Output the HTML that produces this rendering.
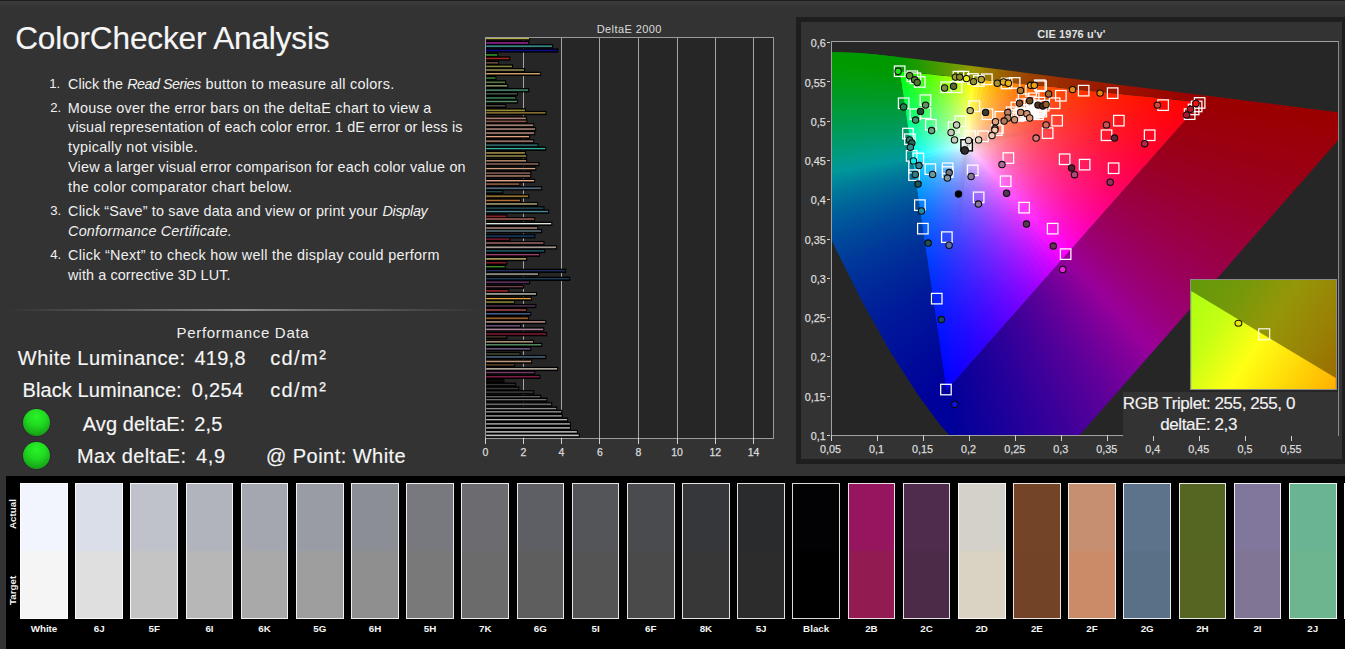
<!DOCTYPE html><html><head><meta charset="utf-8"><title>ColorChecker Analysis</title><style>
*{margin:0;padding:0;box-sizing:border-box}
html,body{width:1345px;height:649px;overflow:hidden;background:#333;font-family:"Liberation Sans",sans-serif;color:#f2f2f2}
body{position:relative}
div,i,svg{position:absolute}
.lay{left:0;top:0;width:100%;height:100%}
#topline{left:0;top:0;width:1345px;height:8px;background:linear-gradient(#1e1e1e 0,#1e1e1e 1px,#3b3b3b 1px,#333 8px)}
#title{left:14px;top:17px;font-size:32px;line-height:40px;white-space:nowrap;color:#f6f6f6;letter-spacing:-0.2px}
.li{left:50px;font-size:15px;line-height:19.9px;white-space:nowrap;color:#f0f0f0}
.li b{position:absolute;left:0;font-weight:normal;font-size:13.5px}
.li span{position:absolute;left:18.4px;top:0;display:block}
#hr{left:7px;top:309px;width:474px;height:1.6px;background:linear-gradient(90deg,#333 0,#4c4c4c 15%,#6e6e6e 35%,#8a8a8a 50%,#6e6e6e 65%,#4c4c4c 85%,#333 100%)}
.t{line-height:24px;white-space:nowrap}
.led{width:27.2px;height:27.3px;border-radius:50%;background:radial-gradient(circle at 50% 28%,#28f428 0,#20d820 40%,#18ac18 72%,#0f7c0f 100%);box-shadow:0 0 1.5px rgba(0,0,0,.5)}
#barplot{left:485px;top:37px;width:289px;height:401.5px;background:#262626;border:1px solid #9a9a9a;overflow:hidden}
#barplot i{left:0;height:4.4px;border-right:1px solid #000;display:block;background:linear-gradient(#000 1.35px,var(--c) 1.55px,var(--c) 2.15px,#000 2.8px)}
.bg{top:0;width:1px;height:400px;background:#a4a4a4}
.bt{top:438px;width:1px;height:5.7px;background:#d0d0d0}
.bl,.cl{width:40px;text-align:center;font-size:10.5px;line-height:14px;color:#dcdcdc;-webkit-text-stroke:0.25px #dcdcdc}
.bl{top:445.3px}
.ct{top:435px;width:1px;height:5.6px;background:#d0d0d0}
.cl{top:442.3px;font-size:10.8px}
.cyt{left:826.8px;width:3.2px;height:1px;background:#d0d0d0}
.cyl{left:786px;width:39.8px;text-align:right;font-size:10.8px;line-height:14px;color:#dcdcdc;-webkit-text-stroke:0.25px #dcdcdc}
#ciepanel{left:795.5px;top:17.1px;width:551.6px;height:447.4px;background:#333;border:5.5px solid #1e1e1e}
#cieplot{background:#262626;overflow:hidden}
#cieframe{left:830.8px;top:40.9px;width:508.4px;height:395px;border:1px solid #a0a0a0;border-right-color:#8a8a8a}
#strip{left:6px;top:475.5px;width:1339px;height:174px;background:#000}
.sw{top:482.7px;width:47.8px;height:136.2px;border:1px solid rgba(255,255,255,.85)}
.swl{top:622.5px;width:67.8px;text-align:center;font-size:9.8px;line-height:12px;font-weight:bold;color:#f4f4f4}
.rot{font-size:9.8px;font-weight:bold;line-height:12px;color:#f4f4f4;transform:rotate(-90deg);transform-origin:0 0;white-space:nowrap}
#inset{left:1190.2px;top:278.6px;width:146.6px;height:111.4px;border:1px solid #8c8c8c;overflow:hidden;background:#888}
#rgbbox{left:1122.5px;top:391.5px;width:215.7px;height:44.6px;background:#333}
.rb{font-size:17px;line-height:20px;white-space:nowrap;color:#f2f2f2}
</style></head><body>
<div id="topline"></div>
<div id="hr"></div>
<div class="led" style="left:22.9px;top:409.1px"></div>
<div class="led" style="left:22.9px;top:442.1px"></div>
<div id="barplot"><div class="bg" style="left:37.0px"></div><div class="bg" style="left:75.0px"></div><div class="bg" style="left:113.4px"></div><div class="bg" style="left:152.0px"></div><div class="bg" style="left:191.0px"></div><div class="bg" style="left:229.0px"></div><div class="bg" style="left:267.0px"></div><svg class="lay" width="287" height="400" viewBox="0 0 287 400"><g fill="#000"><rect y="-1.65" width="44.0" height="4.3"/><rect y="2.95" width="43.1" height="4.3"/><rect y="6.15" width="67.1" height="4.3"/><rect y="10.35" width="72.2" height="4.3"/><rect y="14.95" width="12.2" height="4.3"/><rect y="18.35" width="24.2" height="4.3"/><rect y="22.85" width="13.1" height="4.3"/><rect y="26.35" width="26.9" height="4.3"/><rect y="30.05" width="39.0" height="4.3"/><rect y="33.75" width="55.1" height="4.3"/><rect y="38.05" width="10.3" height="4.3"/><rect y="42.25" width="20.0" height="4.3"/><rect y="45.85" width="22.1" height="4.3"/><rect y="50.15" width="43.1" height="4.3"/><rect y="53.85" width="32.0" height="4.3"/><rect y="58.05" width="30.2" height="4.3"/><rect y="61.45" width="32.0" height="4.3"/><rect y="65.85" width="20.3" height="4.3"/><rect y="70.35" width="39.9" height="4.3"/><rect y="72.95" width="60.4" height="4.3"/><rect y="78.35" width="40.8" height="4.3"/><rect y="81.35" width="41.3" height="4.3"/><rect y="85.25" width="48.2" height="4.3"/><rect y="89.15" width="50.1" height="4.3"/><rect y="93.15" width="49.1" height="4.3"/><rect y="96.65" width="44.0" height="4.3"/><rect y="101.25" width="48.2" height="4.3"/><rect y="105.25" width="52.4" height="4.3"/><rect y="108.65" width="60.2" height="4.3"/><rect y="113.05" width="39.9" height="4.3"/><rect y="116.15" width="41.1" height="4.3"/><rect y="120.95" width="41.1" height="4.3"/><rect y="124.15" width="53.3" height="4.3"/><rect y="128.65" width="50.3" height="4.3"/><rect y="133.25" width="45.2" height="4.3"/><rect y="136.15" width="45.2" height="4.3"/><rect y="140.85" width="49.1" height="4.3"/><rect y="144.25" width="34.2" height="4.3"/><rect y="148.35" width="56.2" height="4.3"/><rect y="151.85" width="17.2" height="4.3"/><rect y="156.35" width="43.1" height="4.3"/><rect y="160.55" width="35.0" height="4.3"/><rect y="164.15" width="52.1" height="4.3"/><rect y="168.35" width="58.4" height="4.3"/><rect y="171.65" width="63.2" height="4.3"/><rect y="176.45" width="21.2" height="4.3"/><rect y="179.25" width="49.1" height="4.3"/><rect y="183.85" width="66.2" height="4.3"/><rect y="188.25" width="52.1" height="4.3"/><rect y="191.25" width="56.1" height="4.3"/><rect y="196.35" width="49.3" height="4.3"/><rect y="199.35" width="24.2" height="4.3"/><rect y="203.25" width="58.4" height="4.3"/><rect y="207.45" width="71.1" height="4.3"/><rect y="211.15" width="59.1" height="4.3"/><rect y="214.85" width="54.0" height="4.3"/><rect y="219.15" width="41.1" height="4.3"/><rect y="223.05" width="21.2" height="4.3"/><rect y="226.95" width="19.7" height="4.3"/><rect y="230.95" width="80.1" height="4.3"/><rect y="234.35" width="53.0" height="4.3"/><rect y="238.95" width="84.2" height="4.3"/><rect y="242.45" width="44.0" height="4.3"/><rect y="246.85" width="38.0" height="4.3"/><rect y="251.15" width="23.1" height="4.3"/><rect y="254.25" width="51.0" height="4.3"/><rect y="258.85" width="45.9" height="4.3"/><rect y="262.35" width="29.0" height="4.3"/><rect y="266.25" width="50.3" height="4.3"/><rect y="270.35" width="41.1" height="4.3"/><rect y="274.15" width="45.2" height="4.3"/><rect y="278.55" width="43.1" height="4.3"/><rect y="282.25" width="60.2" height="4.3"/><rect y="286.15" width="35.0" height="4.3"/><rect y="289.65" width="58.2" height="4.3"/><rect y="294.35" width="61.1" height="4.3"/><rect y="297.25" width="21.2" height="4.3"/><rect y="302.15" width="48.0" height="4.3"/><rect y="305.15" width="56.2" height="4.3"/><rect y="309.25" width="45.2" height="4.3"/><rect y="314.35" width="34.5" height="4.3"/><rect y="317.35" width="60.2" height="4.3"/><rect y="321.75" width="46.1" height="4.3"/><rect y="325.25" width="29.0" height="4.3"/><rect y="329.25" width="72.1" height="4.3"/><rect y="332.85" width="49.2" height="4.3"/><rect y="337.15" width="54.4" height="4.3"/><rect y="341.25" width="18.3" height="4.3"/><rect y="344.95" width="30.1" height="4.3"/><rect y="348.85" width="33.2" height="4.3"/><rect y="352.55" width="48.2" height="4.3"/><rect y="357.05" width="55.2" height="4.3"/><rect y="360.05" width="61.4" height="4.3"/><rect y="364.65" width="66.1" height="4.3"/><rect y="368.95" width="71.2" height="4.3"/><rect y="372.25" width="76.2" height="4.3"/><rect y="376.35" width="76.8" height="4.3"/><rect y="380.05" width="82.1" height="4.3"/><rect y="384.35" width="84.9" height="4.3"/><rect y="388.35" width="84.9" height="4.3"/><rect y="392.35" width="91.9" height="4.3"/><rect y="395.75" width="93.8" height="4.3"/></g><g><rect y="-0.25" width="42.9" height="1.1" fill="#e0d060"/><rect y="4.35" width="42.0" height="1.1" fill="#c030c0"/><rect y="7.55" width="66.0" height="1.1" fill="#50c0c0"/><rect y="11.75" width="71.1" height="1.1" fill="#1010a0"/><rect y="16.35" width="11.1" height="1.1" fill="#40c040"/><rect y="19.75" width="23.1" height="1.1" fill="#c03020"/><rect y="24.25" width="12.0" height="1.1" fill="#806050"/><rect y="27.75" width="25.8" height="1.1" fill="#a0a050"/><rect y="31.45" width="37.9" height="1.1" fill="#c0b070"/><rect y="35.15" width="54.0" height="1.1" fill="#e0b070"/><rect y="39.45" width="9.2" height="1.1" fill="#50a050"/><rect y="43.65" width="18.9" height="1.1" fill="#70a060"/><rect y="47.25" width="21.0" height="1.1" fill="#a0b080"/><rect y="51.55" width="42.0" height="1.1" fill="#60b090"/><rect y="55.25" width="30.9" height="1.1" fill="#506050"/><rect y="59.45" width="29.1" height="1.1" fill="#50a070"/><rect y="62.85" width="30.9" height="1.1" fill="#60a070"/><rect y="67.25" width="19.2" height="1.1" fill="#605a50"/><rect y="71.75" width="38.8" height="1.1" fill="#c0b040"/><rect y="74.35" width="59.3" height="1.1" fill="#b09040"/><rect y="79.75" width="39.7" height="1.1" fill="#e0a090"/><rect y="82.75" width="40.2" height="1.1" fill="#b07060"/><rect y="86.65" width="47.1" height="1.1" fill="#e0b0a0"/><rect y="90.55" width="49.0" height="1.1" fill="#e0b0a0"/><rect y="94.55" width="48.0" height="1.1" fill="#e0b0a0"/><rect y="98.05" width="42.9" height="1.1" fill="#e0a080"/><rect y="102.65" width="47.1" height="1.1" fill="#d0a090"/><rect y="106.65" width="51.3" height="1.1" fill="#409090"/><rect y="110.05" width="59.1" height="1.1" fill="#30b0a0"/><rect y="114.45" width="38.8" height="1.1" fill="#d0b060"/><rect y="117.55" width="40.0" height="1.1" fill="#c0b060"/><rect y="122.35" width="40.0" height="1.1" fill="#d0a080"/><rect y="125.55" width="52.2" height="1.1" fill="#b08070"/><rect y="130.05" width="49.2" height="1.1" fill="#d0a080"/><rect y="134.65" width="44.1" height="1.1" fill="#b08070"/><rect y="137.55" width="44.1" height="1.1" fill="#d0a080"/><rect y="142.25" width="48.0" height="1.1" fill="#f0b090"/><rect y="145.65" width="33.1" height="1.1" fill="#c08060"/><rect y="149.75" width="55.1" height="1.1" fill="#7090b0"/><rect y="153.25" width="16.1" height="1.1" fill="#205050"/><rect y="157.75" width="42.0" height="1.1" fill="#d0a040"/><rect y="161.95" width="33.9" height="1.1" fill="#d08040"/><rect y="165.55" width="51.0" height="1.1" fill="#d0c890"/><rect y="169.75" width="57.3" height="1.1" fill="#306070"/><rect y="173.05" width="62.1" height="1.1" fill="#5090a0"/><rect y="177.85" width="20.1" height="1.1" fill="#b03030"/><rect y="180.65" width="48.0" height="1.1" fill="#d08070"/><rect y="185.25" width="65.1" height="1.1" fill="#e0e8e0"/><rect y="189.65" width="51.0" height="1.1" fill="#e0b0a0"/><rect y="192.65" width="55.0" height="1.1" fill="#7090a0"/><rect y="197.75" width="48.2" height="1.1" fill="#205080"/><rect y="200.75" width="23.1" height="1.1" fill="#a02040"/><rect y="204.65" width="57.3" height="1.1" fill="#c08080"/><rect y="208.85" width="70.0" height="1.1" fill="#e0d0c8"/><rect y="212.55" width="58.0" height="1.1" fill="#207080"/><rect y="216.25" width="52.9" height="1.1" fill="#a04070"/><rect y="220.55" width="40.0" height="1.1" fill="#e0d080"/><rect y="224.45" width="20.1" height="1.1" fill="#a02030"/><rect y="228.35" width="18.6" height="1.1" fill="#409030"/><rect y="232.35" width="79.0" height="1.1" fill="#203060"/><rect y="235.75" width="51.9" height="1.1" fill="#d0d0c0"/><rect y="240.35" width="83.1" height="1.1" fill="#204060"/><rect y="243.85" width="42.9" height="1.1" fill="#804080"/><rect y="248.25" width="36.9" height="1.1" fill="#704050"/><rect y="252.55" width="22.0" height="1.1" fill="#c03030"/><rect y="255.65" width="49.9" height="1.1" fill="#e0e0d0"/><rect y="260.25" width="44.8" height="1.1" fill="#e0a040"/><rect y="263.75" width="27.9" height="1.1" fill="#b0b040"/><rect y="267.65" width="49.2" height="1.1" fill="#604060"/><rect y="271.75" width="40.0" height="1.1" fill="#d06060"/><rect y="275.55" width="44.1" height="1.1" fill="#5070a0"/><rect y="279.95" width="42.0" height="1.1" fill="#d08030"/><rect y="283.65" width="59.1" height="1.1" fill="#e0b0a0"/><rect y="287.55" width="33.9" height="1.1" fill="#806090"/><rect y="291.05" width="57.1" height="1.1" fill="#d0a0c0"/><rect y="295.75" width="60.0" height="1.1" fill="#a02040"/><rect y="298.65" width="20.1" height="1.1" fill="#504030"/><rect y="303.55" width="46.9" height="1.1" fill="#d0b090"/><rect y="306.55" width="55.1" height="1.1" fill="#60a070"/><rect y="310.65" width="44.1" height="1.1" fill="#8070a0"/><rect y="315.75" width="33.4" height="1.1" fill="#506040"/><rect y="318.75" width="59.1" height="1.1" fill="#6080a0"/><rect y="323.15" width="45.0" height="1.1" fill="#e0b090"/><rect y="326.65" width="27.9" height="1.1" fill="#705030"/><rect y="330.65" width="71.0" height="1.1" fill="#e0d8c8"/><rect y="334.25" width="48.1" height="1.1" fill="#804070"/><rect y="338.55" width="53.3" height="1.1" fill="#902050"/><rect y="342.65" width="17.2" height="1.1" fill="#101010"/><rect y="346.35" width="29.0" height="1.1" fill="#303030"/><rect y="350.25" width="32.1" height="1.1" fill="#404040"/><rect y="353.95" width="47.1" height="1.1" fill="#505050"/><rect y="358.45" width="54.1" height="1.1" fill="#606060"/><rect y="361.45" width="60.3" height="1.1" fill="#707070"/><rect y="366.05" width="65.0" height="1.1" fill="#888888"/><rect y="370.35" width="70.1" height="1.1" fill="#909090"/><rect y="373.65" width="75.1" height="1.1" fill="#a0a0a0"/><rect y="377.75" width="75.7" height="1.1" fill="#b0b0b0"/><rect y="381.45" width="81.0" height="1.1" fill="#b8b8b8"/><rect y="385.75" width="83.8" height="1.1" fill="#c0c0c0"/><rect y="389.75" width="83.8" height="1.1" fill="#d0d0d0"/><rect y="393.75" width="90.8" height="1.1" fill="#e0e0e0"/><rect y="397.15" width="92.7" height="1.1" fill="#f4f4f4"/></g><g opacity=".45"><rect y="0.85" width="42.9" height="0.6" fill="#e0d060"/><rect y="5.45" width="42.0" height="0.6" fill="#c030c0"/><rect y="8.65" width="66.0" height="0.6" fill="#50c0c0"/><rect y="12.85" width="71.1" height="0.6" fill="#1010a0"/><rect y="17.45" width="11.1" height="0.6" fill="#40c040"/><rect y="20.85" width="23.1" height="0.6" fill="#c03020"/><rect y="25.35" width="12.0" height="0.6" fill="#806050"/><rect y="28.85" width="25.8" height="0.6" fill="#a0a050"/><rect y="32.55" width="37.9" height="0.6" fill="#c0b070"/><rect y="36.25" width="54.0" height="0.6" fill="#e0b070"/><rect y="40.55" width="9.2" height="0.6" fill="#50a050"/><rect y="44.75" width="18.9" height="0.6" fill="#70a060"/><rect y="48.35" width="21.0" height="0.6" fill="#a0b080"/><rect y="52.65" width="42.0" height="0.6" fill="#60b090"/><rect y="56.35" width="30.9" height="0.6" fill="#506050"/><rect y="60.55" width="29.1" height="0.6" fill="#50a070"/><rect y="63.95" width="30.9" height="0.6" fill="#60a070"/><rect y="68.35" width="19.2" height="0.6" fill="#605a50"/><rect y="72.85" width="38.8" height="0.6" fill="#c0b040"/><rect y="75.45" width="59.3" height="0.6" fill="#b09040"/><rect y="80.85" width="39.7" height="0.6" fill="#e0a090"/><rect y="83.85" width="40.2" height="0.6" fill="#b07060"/><rect y="87.75" width="47.1" height="0.6" fill="#e0b0a0"/><rect y="91.65" width="49.0" height="0.6" fill="#e0b0a0"/><rect y="95.65" width="48.0" height="0.6" fill="#e0b0a0"/><rect y="99.15" width="42.9" height="0.6" fill="#e0a080"/><rect y="103.75" width="47.1" height="0.6" fill="#d0a090"/><rect y="107.75" width="51.3" height="0.6" fill="#409090"/><rect y="111.15" width="59.1" height="0.6" fill="#30b0a0"/><rect y="115.55" width="38.8" height="0.6" fill="#d0b060"/><rect y="118.65" width="40.0" height="0.6" fill="#c0b060"/><rect y="123.45" width="40.0" height="0.6" fill="#d0a080"/><rect y="126.65" width="52.2" height="0.6" fill="#b08070"/><rect y="131.15" width="49.2" height="0.6" fill="#d0a080"/><rect y="135.75" width="44.1" height="0.6" fill="#b08070"/><rect y="138.65" width="44.1" height="0.6" fill="#d0a080"/><rect y="143.35" width="48.0" height="0.6" fill="#f0b090"/><rect y="146.75" width="33.1" height="0.6" fill="#c08060"/><rect y="150.85" width="55.1" height="0.6" fill="#7090b0"/><rect y="154.35" width="16.1" height="0.6" fill="#205050"/><rect y="158.85" width="42.0" height="0.6" fill="#d0a040"/><rect y="163.05" width="33.9" height="0.6" fill="#d08040"/><rect y="166.65" width="51.0" height="0.6" fill="#d0c890"/><rect y="170.85" width="57.3" height="0.6" fill="#306070"/><rect y="174.15" width="62.1" height="0.6" fill="#5090a0"/><rect y="178.95" width="20.1" height="0.6" fill="#b03030"/><rect y="181.75" width="48.0" height="0.6" fill="#d08070"/><rect y="186.35" width="65.1" height="0.6" fill="#e0e8e0"/><rect y="190.75" width="51.0" height="0.6" fill="#e0b0a0"/><rect y="193.75" width="55.0" height="0.6" fill="#7090a0"/><rect y="198.85" width="48.2" height="0.6" fill="#205080"/><rect y="201.85" width="23.1" height="0.6" fill="#a02040"/><rect y="205.75" width="57.3" height="0.6" fill="#c08080"/><rect y="209.95" width="70.0" height="0.6" fill="#e0d0c8"/><rect y="213.65" width="58.0" height="0.6" fill="#207080"/><rect y="217.35" width="52.9" height="0.6" fill="#a04070"/><rect y="221.65" width="40.0" height="0.6" fill="#e0d080"/><rect y="225.55" width="20.1" height="0.6" fill="#a02030"/><rect y="229.45" width="18.6" height="0.6" fill="#409030"/><rect y="233.45" width="79.0" height="0.6" fill="#203060"/><rect y="236.85" width="51.9" height="0.6" fill="#d0d0c0"/><rect y="241.45" width="83.1" height="0.6" fill="#204060"/><rect y="244.95" width="42.9" height="0.6" fill="#804080"/><rect y="249.35" width="36.9" height="0.6" fill="#704050"/><rect y="253.65" width="22.0" height="0.6" fill="#c03030"/><rect y="256.75" width="49.9" height="0.6" fill="#e0e0d0"/><rect y="261.35" width="44.8" height="0.6" fill="#e0a040"/><rect y="264.85" width="27.9" height="0.6" fill="#b0b040"/><rect y="268.75" width="49.2" height="0.6" fill="#604060"/><rect y="272.85" width="40.0" height="0.6" fill="#d06060"/><rect y="276.65" width="44.1" height="0.6" fill="#5070a0"/><rect y="281.05" width="42.0" height="0.6" fill="#d08030"/><rect y="284.75" width="59.1" height="0.6" fill="#e0b0a0"/><rect y="288.65" width="33.9" height="0.6" fill="#806090"/><rect y="292.15" width="57.1" height="0.6" fill="#d0a0c0"/><rect y="296.85" width="60.0" height="0.6" fill="#a02040"/><rect y="299.75" width="20.1" height="0.6" fill="#504030"/><rect y="304.65" width="46.9" height="0.6" fill="#d0b090"/><rect y="307.65" width="55.1" height="0.6" fill="#60a070"/><rect y="311.75" width="44.1" height="0.6" fill="#8070a0"/><rect y="316.85" width="33.4" height="0.6" fill="#506040"/><rect y="319.85" width="59.1" height="0.6" fill="#6080a0"/><rect y="324.25" width="45.0" height="0.6" fill="#e0b090"/><rect y="327.75" width="27.9" height="0.6" fill="#705030"/><rect y="331.75" width="71.0" height="0.6" fill="#e0d8c8"/><rect y="335.35" width="48.1" height="0.6" fill="#804070"/><rect y="339.65" width="53.3" height="0.6" fill="#902050"/><rect y="343.75" width="17.2" height="0.6" fill="#101010"/><rect y="347.45" width="29.0" height="0.6" fill="#303030"/><rect y="351.35" width="32.1" height="0.6" fill="#404040"/><rect y="355.05" width="47.1" height="0.6" fill="#505050"/><rect y="359.55" width="54.1" height="0.6" fill="#606060"/><rect y="362.55" width="60.3" height="0.6" fill="#707070"/><rect y="367.15" width="65.0" height="0.6" fill="#888888"/><rect y="371.45" width="70.1" height="0.6" fill="#909090"/><rect y="374.75" width="75.1" height="0.6" fill="#a0a0a0"/><rect y="378.85" width="75.7" height="0.6" fill="#b0b0b0"/><rect y="382.55" width="81.0" height="0.6" fill="#b8b8b8"/><rect y="386.85" width="83.8" height="0.6" fill="#c0c0c0"/><rect y="390.85" width="83.8" height="0.6" fill="#d0d0d0"/><rect y="394.85" width="90.8" height="0.6" fill="#e0e0e0"/><rect y="398.25" width="92.7" height="0.6" fill="#f4f4f4"/></g></svg></div>
<div id="ciepanel"></div>
<div id="cieplot" style="left:831.4px;top:41.8px;width:507.1px;height:393.3px">
<div class="lay" style="clip-path:polygon(190.7px 458.9px,189.7px 459.4px,186.4px 458.7px,180.8px 454.2px,170.3px 444.4px,153.1px 428.7px,127.0px 403.4px,109.7px 383.9px,86.7px 353.2px,59.6px 311.2px,30.3px 258.9px,2.0px 202.4px,-20.1px 148.1px,-35.1px 102.4px,-42.9px 68.4px,-44.8px 44.7px,-41.8px 28.4px,-34.8px 18.1px,-24.8px 12.8px,-12.9px 10.9px,0.1px 10.4px,13.2px 10.6px,26.9px 11.3px,41.7px 12.5px,57.8px 14.1px,75.5px 16.1px,95.1px 18.4px,116.7px 21.1px,140.7px 24.1px,167.0px 27.4px,195.8px 31.1px,226.8px 35.1px,259.6px 39.2px,293.3px 43.6px,325.9px 47.7px,357.7px 51.8px,386.5px 55.4px,411.9px 58.7px,433.6px 61.4px,467.0px 65.7px,491.5px 68.8px,507.6px 70.9px,517.1px 72.1px,525.4px 73.1px,528.7px 73.6px)">
<div class="lay" style="background:conic-gradient(from 200.00deg at 369.4px 60.7px,#00009a 21.48deg,#00029a 22.99deg,#00059a 24.50deg,#00079a 26.01deg,#000a9a 27.53deg,#000d9a 29.04deg,#00109a 30.55deg,#00139a 32.06deg,#00169a 33.58deg,#00199a 35.09deg,#001d9a 36.60deg,#00219a 38.11deg,#00259a 39.63deg,#002a9a 41.14deg,#002e9a 42.65deg,#00349a 44.16deg,#00399a 45.68deg,#00409a 47.19deg,#00469a 48.70deg,#004e9a 50.21deg,#00579a 51.72deg,#00609a 53.24deg,#006b9a 54.75deg,#00779a 56.26deg,#00869a 57.77deg,#00979a 59.29deg,#009a8b 60.80deg,#009a7a 62.31deg,#009a69 63.82deg,#009a5a 65.34deg,#009a4b 66.85deg,#009a3d 68.36deg,#009a30 69.87deg,#009a23 71.39deg,#009a17 72.90deg,#009a0b 74.41deg,#009a00 75.92deg);clip-path:polygon(-364.6px -2939.0px,502.9px 2998.0px,-2465.6px 3431.7px,-3333.1px -2505.2px)"></div>
<div class="lay" style="background:conic-gradient(from 60.00deg at 69.2px 29.5px,#9a0000 35.92deg,#9a0005 38.03deg,#9a000a 40.13deg,#9a000f 42.24deg,#9a0014 44.34deg,#9a001a 46.45deg,#9a0020 48.55deg,#9a0025 50.66deg,#9a002c 52.76deg,#9a0032 54.86deg,#9a0039 56.97deg,#9a0040 59.07deg,#9a0047 61.18deg,#9a004f 63.28deg,#9a0058 65.39deg,#9a0061 67.49deg,#9a006b 69.60deg,#9a0075 71.70deg,#9a0081 73.81deg,#9a008e 75.91deg,#99009a 78.01deg,#8b009a 80.12deg,#7e009a 82.22deg,#72009a 84.33deg,#66009a 86.43deg,#5b009a 88.54deg,#51009a 90.64deg,#48009a 92.75deg,#3e009a 94.85deg,#36009a 96.96deg,#2d009a 99.06deg,#25009a 101.16deg,#1d009a 103.27deg,#16009a 105.37deg,#0e009a 107.48deg,#07009a 109.58deg,#00009a 111.69deg);clip-path:polygon(-1871.3px 2595.5px,2102.6px -1899.9px,4350.3px 87.0px,376.4px 4582.4px)"></div>
<div class="lay" style="background:conic-gradient(from 300.00deg at 115.7px 347.8px,#009a00 51.69deg,#0d9a00 53.07deg,#1b9a00 54.45deg,#299a00 55.84deg,#389a00 57.22deg,#489a00 58.60deg,#589a00 59.99deg,#6a9a00 61.37deg,#7c9a00 62.75deg,#909a00 64.13deg,#9a9000 65.52deg,#9a7f00 66.90deg,#9a7100 68.28deg,#9a6400 69.67deg,#9a5a00 71.05deg,#9a5100 72.43deg,#9a4800 73.82deg,#9a4100 75.20deg,#9a3b00 76.58deg,#9a3500 77.96deg,#9a3000 79.35deg,#9a2b00 80.73deg,#9a2600 82.11deg,#9a2200 83.50deg,#9a1f00 84.88deg,#9a1b00 86.26deg,#9a1800 87.65deg,#9a1500 89.03deg,#9a1200 90.41deg,#9a0f00 91.79deg,#9a0d00 93.18deg,#9a0a00 94.56deg,#9a0800 95.94deg,#9a0600 97.33deg,#9a0400 98.71deg,#9a0200 100.09deg,#9a0000 101.48deg);clip-path:polygon(-2914.8px -280.1px,3053.1px 339.1px,3362.8px -2644.9px,-2605.2px -3264.1px)"></div>
</div>
<svg class="lay" width="507.1" height="393.3" viewBox="831.4 41.8 507.1 393.3"><defs><linearGradient id="g0" gradientUnits="userSpaceOnUse" x1="967.7" y1="145.4" x2="1198.2" y2="102.2"><stop offset="0" stop-color="#ffffff"/><stop offset="0.06" stop-color="#ffc0bf"/><stop offset="0.12" stop-color="#ff9595"/><stop offset="0.2" stop-color="#ff6f6f"/><stop offset="0.3" stop-color="#ff4f4f"/><stop offset="0.42" stop-color="#ff3635"/><stop offset="0.56" stop-color="#ff2221"/><stop offset="0.72" stop-color="#ff1212"/><stop offset="0.86" stop-color="#ff0808"/><stop offset="1" stop-color="#ff0100"/></linearGradient><linearGradient id="g1" gradientUnits="userSpaceOnUse" x1="967.7" y1="145.4" x2="1192.8" y2="101.6"><stop offset="0" stop-color="#ffffff"/><stop offset="0.06" stop-color="#ffc1c0"/><stop offset="0.12" stop-color="#ff9796"/><stop offset="0.2" stop-color="#ff7170"/><stop offset="0.3" stop-color="#ff5150"/><stop offset="0.42" stop-color="#ff3836"/><stop offset="0.56" stop-color="#ff2422"/><stop offset="0.72" stop-color="#ff1412"/><stop offset="0.86" stop-color="#ff0a08"/><stop offset="1" stop-color="#ff0200"/></linearGradient><linearGradient id="g2" gradientUnits="userSpaceOnUse" x1="967.7" y1="145.4" x2="1187.4" y2="101.1"><stop offset="0" stop-color="#ffffff"/><stop offset="0.06" stop-color="#ffc2c1"/><stop offset="0.12" stop-color="#ff9997"/><stop offset="0.2" stop-color="#ff7371"/><stop offset="0.3" stop-color="#ff5451"/><stop offset="0.42" stop-color="#ff3a37"/><stop offset="0.56" stop-color="#ff2623"/><stop offset="0.72" stop-color="#ff1612"/><stop offset="0.86" stop-color="#ff0c08"/><stop offset="1" stop-color="#ff0400"/></linearGradient><linearGradient id="g3" gradientUnits="userSpaceOnUse" x1="967.7" y1="145.4" x2="1182.1" y2="100.5"><stop offset="0" stop-color="#ffffff"/><stop offset="0.06" stop-color="#ffc3c2"/><stop offset="0.12" stop-color="#ff9b99"/><stop offset="0.2" stop-color="#ff7572"/><stop offset="0.3" stop-color="#ff5652"/><stop offset="0.42" stop-color="#ff3c38"/><stop offset="0.56" stop-color="#ff2823"/><stop offset="0.72" stop-color="#ff1813"/><stop offset="0.86" stop-color="#ff0d08"/><stop offset="1" stop-color="#ff0500"/></linearGradient><linearGradient id="g4" gradientUnits="userSpaceOnUse" x1="967.7" y1="145.4" x2="1176.7" y2="100.0"><stop offset="0" stop-color="#ffffff"/><stop offset="0.06" stop-color="#ffc5c3"/><stop offset="0.12" stop-color="#ff9d9a"/><stop offset="0.2" stop-color="#ff7774"/><stop offset="0.3" stop-color="#ff5853"/><stop offset="0.42" stop-color="#ff3e39"/><stop offset="0.56" stop-color="#ff2a24"/><stop offset="0.72" stop-color="#ff1a13"/><stop offset="0.86" stop-color="#ff0f08"/><stop offset="1" stop-color="#ff0700"/></linearGradient><linearGradient id="g5" gradientUnits="userSpaceOnUse" x1="967.7" y1="145.4" x2="1171.4" y2="99.4"><stop offset="0" stop-color="#ffffff"/><stop offset="0.06" stop-color="#ffc6c4"/><stop offset="0.12" stop-color="#ff9e9b"/><stop offset="0.2" stop-color="#ff7a75"/><stop offset="0.3" stop-color="#ff5a54"/><stop offset="0.42" stop-color="#ff403a"/><stop offset="0.56" stop-color="#ff2c24"/><stop offset="0.72" stop-color="#ff1c13"/><stop offset="0.86" stop-color="#ff1108"/><stop offset="1" stop-color="#ff0900"/></linearGradient><linearGradient id="g6" gradientUnits="userSpaceOnUse" x1="967.7" y1="145.4" x2="1166.0" y2="98.8"><stop offset="0" stop-color="#ffffff"/><stop offset="0.06" stop-color="#ffc7c5"/><stop offset="0.12" stop-color="#ffa09c"/><stop offset="0.2" stop-color="#ff7c76"/><stop offset="0.3" stop-color="#ff5c55"/><stop offset="0.42" stop-color="#ff433a"/><stop offset="0.56" stop-color="#ff2e25"/><stop offset="0.72" stop-color="#ff1e14"/><stop offset="0.86" stop-color="#ff1309"/><stop offset="1" stop-color="#ff0b00"/></linearGradient><linearGradient id="g7" gradientUnits="userSpaceOnUse" x1="967.7" y1="145.4" x2="1160.6" y2="98.3"><stop offset="0" stop-color="#ffffff"/><stop offset="0.06" stop-color="#ffc8c6"/><stop offset="0.12" stop-color="#ffa29d"/><stop offset="0.2" stop-color="#ff7e77"/><stop offset="0.3" stop-color="#ff5f56"/><stop offset="0.42" stop-color="#ff453b"/><stop offset="0.56" stop-color="#ff3026"/><stop offset="0.72" stop-color="#ff2014"/><stop offset="0.86" stop-color="#ff1509"/><stop offset="1" stop-color="#ff0d00"/></linearGradient><linearGradient id="g8" gradientUnits="userSpaceOnUse" x1="967.7" y1="145.4" x2="1155.3" y2="97.7"><stop offset="0" stop-color="#ffffff"/><stop offset="0.06" stop-color="#ffcac7"/><stop offset="0.12" stop-color="#ffa49f"/><stop offset="0.2" stop-color="#ff8079"/><stop offset="0.3" stop-color="#ff6158"/><stop offset="0.42" stop-color="#ff483c"/><stop offset="0.56" stop-color="#ff3326"/><stop offset="0.72" stop-color="#ff2214"/><stop offset="0.86" stop-color="#ff1709"/><stop offset="1" stop-color="#ff0f00"/></linearGradient><linearGradient id="g9" gradientUnits="userSpaceOnUse" x1="967.7" y1="145.4" x2="1149.9" y2="97.2"><stop offset="0" stop-color="#ffffff"/><stop offset="0.06" stop-color="#ffcbc7"/><stop offset="0.12" stop-color="#ffa6a0"/><stop offset="0.2" stop-color="#ff837a"/><stop offset="0.3" stop-color="#ff6459"/><stop offset="0.42" stop-color="#ff4a3d"/><stop offset="0.56" stop-color="#ff3527"/><stop offset="0.72" stop-color="#ff2415"/><stop offset="0.86" stop-color="#ff1909"/><stop offset="1" stop-color="#ff1100"/></linearGradient><linearGradient id="g10" gradientUnits="userSpaceOnUse" x1="967.7" y1="145.4" x2="1144.5" y2="96.6"><stop offset="0" stop-color="#ffffff"/><stop offset="0.06" stop-color="#ffccc8"/><stop offset="0.12" stop-color="#ffa8a1"/><stop offset="0.2" stop-color="#ff857b"/><stop offset="0.3" stop-color="#ff665a"/><stop offset="0.42" stop-color="#ff4d3e"/><stop offset="0.56" stop-color="#ff3828"/><stop offset="0.72" stop-color="#ff2715"/><stop offset="0.86" stop-color="#ff1c09"/><stop offset="1" stop-color="#ff1300"/></linearGradient><linearGradient id="g11" gradientUnits="userSpaceOnUse" x1="967.7" y1="145.4" x2="1139.2" y2="96.1"><stop offset="0" stop-color="#ffffff"/><stop offset="0.06" stop-color="#ffcec9"/><stop offset="0.12" stop-color="#ffaaa3"/><stop offset="0.2" stop-color="#ff887d"/><stop offset="0.3" stop-color="#ff695b"/><stop offset="0.42" stop-color="#ff4f3f"/><stop offset="0.56" stop-color="#ff3a28"/><stop offset="0.72" stop-color="#ff2916"/><stop offset="0.86" stop-color="#ff1e0a"/><stop offset="1" stop-color="#ff1500"/></linearGradient><linearGradient id="g12" gradientUnits="userSpaceOnUse" x1="967.7" y1="145.4" x2="1133.8" y2="95.5"><stop offset="0" stop-color="#ffffff"/><stop offset="0.06" stop-color="#ffcfca"/><stop offset="0.12" stop-color="#ffaca4"/><stop offset="0.2" stop-color="#ff8a7e"/><stop offset="0.3" stop-color="#ff6c5d"/><stop offset="0.42" stop-color="#ff5241"/><stop offset="0.56" stop-color="#ff3d29"/><stop offset="0.72" stop-color="#ff2c16"/><stop offset="0.86" stop-color="#ff200a"/><stop offset="1" stop-color="#ff1700"/></linearGradient><linearGradient id="g13" gradientUnits="userSpaceOnUse" x1="967.7" y1="145.4" x2="1128.5" y2="94.9"><stop offset="0" stop-color="#ffffff"/><stop offset="0.06" stop-color="#ffd1cb"/><stop offset="0.12" stop-color="#ffaea5"/><stop offset="0.2" stop-color="#ff8d80"/><stop offset="0.3" stop-color="#ff6f5e"/><stop offset="0.42" stop-color="#ff5542"/><stop offset="0.56" stop-color="#ff402a"/><stop offset="0.72" stop-color="#ff2e17"/><stop offset="0.86" stop-color="#ff230a"/><stop offset="1" stop-color="#ff1a00"/></linearGradient><linearGradient id="g14" gradientUnits="userSpaceOnUse" x1="967.7" y1="145.4" x2="1123.1" y2="94.4"><stop offset="0" stop-color="#ffffff"/><stop offset="0.06" stop-color="#ffd2cc"/><stop offset="0.12" stop-color="#ffb0a7"/><stop offset="0.2" stop-color="#ff8f81"/><stop offset="0.3" stop-color="#ff7160"/><stop offset="0.42" stop-color="#ff5843"/><stop offset="0.56" stop-color="#ff432b"/><stop offset="0.72" stop-color="#ff3117"/><stop offset="0.86" stop-color="#ff260a"/><stop offset="1" stop-color="#ff1d00"/></linearGradient><linearGradient id="g15" gradientUnits="userSpaceOnUse" x1="967.7" y1="145.4" x2="1117.7" y2="93.8"><stop offset="0" stop-color="#ffffff"/><stop offset="0.06" stop-color="#ffd3cd"/><stop offset="0.12" stop-color="#ffb3a8"/><stop offset="0.2" stop-color="#ff9283"/><stop offset="0.3" stop-color="#ff7461"/><stop offset="0.42" stop-color="#ff5b44"/><stop offset="0.56" stop-color="#ff462c"/><stop offset="0.72" stop-color="#ff3418"/><stop offset="0.86" stop-color="#ff280a"/><stop offset="1" stop-color="#ff1f00"/></linearGradient><linearGradient id="g16" gradientUnits="userSpaceOnUse" x1="967.7" y1="145.4" x2="1112.4" y2="93.3"><stop offset="0" stop-color="#ffffff"/><stop offset="0.06" stop-color="#ffd5ce"/><stop offset="0.12" stop-color="#ffb5a9"/><stop offset="0.2" stop-color="#ff9584"/><stop offset="0.3" stop-color="#ff7763"/><stop offset="0.42" stop-color="#ff5e45"/><stop offset="0.56" stop-color="#ff492d"/><stop offset="0.72" stop-color="#ff3718"/><stop offset="0.86" stop-color="#ff2b0b"/><stop offset="1" stop-color="#ff2200"/></linearGradient><linearGradient id="g17" gradientUnits="userSpaceOnUse" x1="967.7" y1="145.4" x2="1107.0" y2="92.7"><stop offset="0" stop-color="#ffffff"/><stop offset="0.06" stop-color="#ffd6cf"/><stop offset="0.12" stop-color="#ffb7ab"/><stop offset="0.2" stop-color="#ff9886"/><stop offset="0.3" stop-color="#ff7b64"/><stop offset="0.42" stop-color="#ff6147"/><stop offset="0.56" stop-color="#ff4c2e"/><stop offset="0.72" stop-color="#ff3a19"/><stop offset="0.86" stop-color="#ff2e0b"/><stop offset="1" stop-color="#ff2500"/></linearGradient><linearGradient id="g18" gradientUnits="userSpaceOnUse" x1="967.7" y1="145.4" x2="1101.6" y2="92.2"><stop offset="0" stop-color="#ffffff"/><stop offset="0.06" stop-color="#ffd8d0"/><stop offset="0.12" stop-color="#ffb9ac"/><stop offset="0.2" stop-color="#ff9b88"/><stop offset="0.3" stop-color="#ff7e66"/><stop offset="0.42" stop-color="#ff6548"/><stop offset="0.56" stop-color="#ff4f2f"/><stop offset="0.72" stop-color="#ff3e19"/><stop offset="0.86" stop-color="#ff320b"/><stop offset="1" stop-color="#ff2800"/></linearGradient><linearGradient id="g19" gradientUnits="userSpaceOnUse" x1="967.7" y1="145.4" x2="1096.3" y2="91.6"><stop offset="0" stop-color="#ffffff"/><stop offset="0.06" stop-color="#ffd9d1"/><stop offset="0.12" stop-color="#ffbcae"/><stop offset="0.2" stop-color="#ff9e89"/><stop offset="0.3" stop-color="#ff8167"/><stop offset="0.42" stop-color="#ff6849"/><stop offset="0.56" stop-color="#ff5330"/><stop offset="0.72" stop-color="#ff411a"/><stop offset="0.86" stop-color="#ff350c"/><stop offset="1" stop-color="#ff2c00"/></linearGradient><linearGradient id="g20" gradientUnits="userSpaceOnUse" x1="967.7" y1="145.4" x2="1090.9" y2="91.1"><stop offset="0" stop-color="#ffffff"/><stop offset="0.06" stop-color="#ffdbd2"/><stop offset="0.12" stop-color="#ffbeaf"/><stop offset="0.2" stop-color="#ffa18b"/><stop offset="0.3" stop-color="#ff8569"/><stop offset="0.42" stop-color="#ff6c4b"/><stop offset="0.56" stop-color="#ff5731"/><stop offset="0.72" stop-color="#ff451b"/><stop offset="0.86" stop-color="#ff390c"/><stop offset="1" stop-color="#ff2f00"/></linearGradient><linearGradient id="g21" gradientUnits="userSpaceOnUse" x1="967.7" y1="145.4" x2="1085.6" y2="90.5"><stop offset="0" stop-color="#ffffff"/><stop offset="0.06" stop-color="#ffdcd3"/><stop offset="0.12" stop-color="#ffc1b1"/><stop offset="0.2" stop-color="#ffa48d"/><stop offset="0.3" stop-color="#ff886b"/><stop offset="0.42" stop-color="#ff704c"/><stop offset="0.56" stop-color="#ff5b32"/><stop offset="0.72" stop-color="#ff491b"/><stop offset="0.86" stop-color="#ff3d0c"/><stop offset="1" stop-color="#ff3300"/></linearGradient><linearGradient id="g22" gradientUnits="userSpaceOnUse" x1="967.7" y1="145.4" x2="1080.2" y2="89.9"><stop offset="0" stop-color="#ffffff"/><stop offset="0.06" stop-color="#ffded4"/><stop offset="0.12" stop-color="#ffc3b3"/><stop offset="0.2" stop-color="#ffa78f"/><stop offset="0.3" stop-color="#ff8c6d"/><stop offset="0.42" stop-color="#ff744e"/><stop offset="0.56" stop-color="#ff5f33"/><stop offset="0.72" stop-color="#ff4d1c"/><stop offset="0.86" stop-color="#ff410d"/><stop offset="1" stop-color="#ff3700"/></linearGradient><linearGradient id="g23" gradientUnits="userSpaceOnUse" x1="967.7" y1="145.4" x2="1074.8" y2="89.4"><stop offset="0" stop-color="#ffffff"/><stop offset="0.06" stop-color="#ffdfd5"/><stop offset="0.12" stop-color="#ffc5b4"/><stop offset="0.2" stop-color="#ffaa91"/><stop offset="0.3" stop-color="#ff906f"/><stop offset="0.42" stop-color="#ff7850"/><stop offset="0.56" stop-color="#ff6334"/><stop offset="0.72" stop-color="#ff511d"/><stop offset="0.86" stop-color="#ff450d"/><stop offset="1" stop-color="#ff3b00"/></linearGradient><linearGradient id="g24" gradientUnits="userSpaceOnUse" x1="967.7" y1="145.4" x2="1069.5" y2="88.8"><stop offset="0" stop-color="#ffffff"/><stop offset="0.06" stop-color="#ffe1d7"/><stop offset="0.12" stop-color="#ffc8b6"/><stop offset="0.2" stop-color="#ffae93"/><stop offset="0.3" stop-color="#ff9471"/><stop offset="0.42" stop-color="#ff7c51"/><stop offset="0.56" stop-color="#ff6836"/><stop offset="0.72" stop-color="#ff561e"/><stop offset="0.86" stop-color="#ff490d"/><stop offset="1" stop-color="#ff4000"/></linearGradient><linearGradient id="g25" gradientUnits="userSpaceOnUse" x1="967.7" y1="145.4" x2="1064.1" y2="88.3"><stop offset="0" stop-color="#ffffff"/><stop offset="0.06" stop-color="#ffe2d8"/><stop offset="0.12" stop-color="#ffcbb7"/><stop offset="0.2" stop-color="#ffb195"/><stop offset="0.3" stop-color="#ff9873"/><stop offset="0.42" stop-color="#ff8153"/><stop offset="0.56" stop-color="#ff6c37"/><stop offset="0.72" stop-color="#ff5b1f"/><stop offset="0.86" stop-color="#ff4e0e"/><stop offset="1" stop-color="#ff4400"/></linearGradient><linearGradient id="g26" gradientUnits="userSpaceOnUse" x1="967.7" y1="145.4" x2="1058.7" y2="87.7"><stop offset="0" stop-color="#ffffff"/><stop offset="0.06" stop-color="#ffe4d9"/><stop offset="0.12" stop-color="#ffcdb9"/><stop offset="0.2" stop-color="#ffb597"/><stop offset="0.3" stop-color="#ff9c75"/><stop offset="0.42" stop-color="#ff8655"/><stop offset="0.56" stop-color="#ff7138"/><stop offset="0.72" stop-color="#ff601f"/><stop offset="0.86" stop-color="#ff530e"/><stop offset="1" stop-color="#ff4900"/></linearGradient><linearGradient id="g27" gradientUnits="userSpaceOnUse" x1="967.7" y1="145.4" x2="1053.4" y2="87.2"><stop offset="0" stop-color="#ffffff"/><stop offset="0.06" stop-color="#ffe5da"/><stop offset="0.12" stop-color="#ffd0bb"/><stop offset="0.2" stop-color="#ffb899"/><stop offset="0.3" stop-color="#ffa177"/><stop offset="0.42" stop-color="#ff8b57"/><stop offset="0.56" stop-color="#ff773a"/><stop offset="0.72" stop-color="#ff6520"/><stop offset="0.86" stop-color="#ff590f"/><stop offset="1" stop-color="#ff4f00"/></linearGradient><linearGradient id="g28" gradientUnits="userSpaceOnUse" x1="967.7" y1="145.4" x2="1048.0" y2="86.6"><stop offset="0" stop-color="#ffffff"/><stop offset="0.06" stop-color="#ffe7db"/><stop offset="0.12" stop-color="#ffd3bd"/><stop offset="0.2" stop-color="#ffbc9b"/><stop offset="0.3" stop-color="#ffa679"/><stop offset="0.42" stop-color="#ff9059"/><stop offset="0.56" stop-color="#ff7c3c"/><stop offset="0.72" stop-color="#ff6b21"/><stop offset="0.86" stop-color="#ff5f0f"/><stop offset="1" stop-color="#ff5500"/></linearGradient><linearGradient id="g29" gradientUnits="userSpaceOnUse" x1="967.7" y1="145.4" x2="1042.7" y2="86.0"><stop offset="0" stop-color="#ffffff"/><stop offset="0.06" stop-color="#ffe9dc"/><stop offset="0.12" stop-color="#ffd5be"/><stop offset="0.2" stop-color="#ffc09d"/><stop offset="0.3" stop-color="#ffaa7c"/><stop offset="0.42" stop-color="#ff955b"/><stop offset="0.56" stop-color="#ff823d"/><stop offset="0.72" stop-color="#ff7123"/><stop offset="0.86" stop-color="#ff6510"/><stop offset="1" stop-color="#ff5b00"/></linearGradient><linearGradient id="g30" gradientUnits="userSpaceOnUse" x1="967.7" y1="145.4" x2="1037.3" y2="85.5"><stop offset="0" stop-color="#ffffff"/><stop offset="0.06" stop-color="#ffeadd"/><stop offset="0.12" stop-color="#ffd8c0"/><stop offset="0.2" stop-color="#ffc4a0"/><stop offset="0.3" stop-color="#ffaf7e"/><stop offset="0.42" stop-color="#ff9b5d"/><stop offset="0.56" stop-color="#ff893f"/><stop offset="0.72" stop-color="#ff7824"/><stop offset="0.86" stop-color="#ff6c10"/><stop offset="1" stop-color="#ff6200"/></linearGradient><linearGradient id="g31" gradientUnits="userSpaceOnUse" x1="967.7" y1="145.4" x2="1031.9" y2="84.9"><stop offset="0" stop-color="#ffffff"/><stop offset="0.06" stop-color="#ffecde"/><stop offset="0.12" stop-color="#ffdbc2"/><stop offset="0.2" stop-color="#ffc8a2"/><stop offset="0.3" stop-color="#ffb581"/><stop offset="0.42" stop-color="#ffa160"/><stop offset="0.56" stop-color="#ff8f41"/><stop offset="0.72" stop-color="#ff7f25"/><stop offset="0.86" stop-color="#ff7311"/><stop offset="1" stop-color="#ff6900"/></linearGradient><linearGradient id="g32" gradientUnits="userSpaceOnUse" x1="967.7" y1="145.4" x2="1026.6" y2="84.4"><stop offset="0" stop-color="#ffffff"/><stop offset="0.06" stop-color="#ffede0"/><stop offset="0.12" stop-color="#ffdec4"/><stop offset="0.2" stop-color="#ffcda4"/><stop offset="0.3" stop-color="#ffba83"/><stop offset="0.42" stop-color="#ffa862"/><stop offset="0.56" stop-color="#ff9643"/><stop offset="0.72" stop-color="#ff8626"/><stop offset="0.86" stop-color="#ff7b12"/><stop offset="1" stop-color="#ff7100"/></linearGradient><linearGradient id="g33" gradientUnits="userSpaceOnUse" x1="967.7" y1="145.4" x2="1021.2" y2="83.8"><stop offset="0" stop-color="#ffffff"/><stop offset="0.06" stop-color="#ffefe1"/><stop offset="0.12" stop-color="#ffe1c6"/><stop offset="0.2" stop-color="#ffd1a7"/><stop offset="0.3" stop-color="#ffc086"/><stop offset="0.42" stop-color="#ffae65"/><stop offset="0.56" stop-color="#ff9e45"/><stop offset="0.72" stop-color="#ff8e28"/><stop offset="0.86" stop-color="#ff8312"/><stop offset="1" stop-color="#ff7a00"/></linearGradient><linearGradient id="g34" gradientUnits="userSpaceOnUse" x1="967.7" y1="145.4" x2="1015.8" y2="83.3"><stop offset="0" stop-color="#ffffff"/><stop offset="0.06" stop-color="#fff1e2"/><stop offset="0.12" stop-color="#ffe4c8"/><stop offset="0.2" stop-color="#ffd5aa"/><stop offset="0.3" stop-color="#ffc589"/><stop offset="0.42" stop-color="#ffb568"/><stop offset="0.56" stop-color="#ffa648"/><stop offset="0.72" stop-color="#ff9729"/><stop offset="0.86" stop-color="#ff8c13"/><stop offset="1" stop-color="#ff8300"/></linearGradient><linearGradient id="g35" gradientUnits="userSpaceOnUse" x1="967.7" y1="145.4" x2="1010.5" y2="82.7"><stop offset="0" stop-color="#ffffff"/><stop offset="0.06" stop-color="#fff3e3"/><stop offset="0.12" stop-color="#ffe7ca"/><stop offset="0.2" stop-color="#ffdaac"/><stop offset="0.3" stop-color="#ffcc8c"/><stop offset="0.42" stop-color="#ffbd6b"/><stop offset="0.56" stop-color="#ffae4a"/><stop offset="0.72" stop-color="#ffa02b"/><stop offset="0.86" stop-color="#ff9614"/><stop offset="1" stop-color="#ff8d00"/></linearGradient><linearGradient id="g36" gradientUnits="userSpaceOnUse" x1="967.7" y1="145.4" x2="1005.1" y2="82.1"><stop offset="0" stop-color="#ffffff"/><stop offset="0.06" stop-color="#fff4e4"/><stop offset="0.12" stop-color="#ffebcc"/><stop offset="0.2" stop-color="#ffdfaf"/><stop offset="0.3" stop-color="#ffd28f"/><stop offset="0.42" stop-color="#ffc56e"/><stop offset="0.56" stop-color="#ffb74d"/><stop offset="0.72" stop-color="#ffab2d"/><stop offset="0.86" stop-color="#ffa115"/><stop offset="1" stop-color="#ff9900"/></linearGradient><linearGradient id="g37" gradientUnits="userSpaceOnUse" x1="967.7" y1="145.4" x2="999.8" y2="81.6"><stop offset="0" stop-color="#ffffff"/><stop offset="0.06" stop-color="#fff6e6"/><stop offset="0.12" stop-color="#ffeece"/><stop offset="0.2" stop-color="#ffe4b2"/><stop offset="0.3" stop-color="#ffd992"/><stop offset="0.42" stop-color="#ffcd71"/><stop offset="0.56" stop-color="#ffc150"/><stop offset="0.72" stop-color="#ffb62f"/><stop offset="0.86" stop-color="#ffad16"/><stop offset="1" stop-color="#ffa500"/></linearGradient><linearGradient id="g38" gradientUnits="userSpaceOnUse" x1="967.7" y1="145.4" x2="994.4" y2="81.0"><stop offset="0" stop-color="#ffffff"/><stop offset="0.06" stop-color="#fff8e7"/><stop offset="0.12" stop-color="#fff1d0"/><stop offset="0.2" stop-color="#ffe9b5"/><stop offset="0.3" stop-color="#ffe096"/><stop offset="0.42" stop-color="#ffd675"/><stop offset="0.56" stop-color="#ffcc53"/><stop offset="0.72" stop-color="#ffc231"/><stop offset="0.86" stop-color="#ffba17"/><stop offset="1" stop-color="#ffb400"/></linearGradient><linearGradient id="g39" gradientUnits="userSpaceOnUse" x1="967.7" y1="145.4" x2="989.0" y2="80.5"><stop offset="0" stop-color="#ffffff"/><stop offset="0.06" stop-color="#fffae8"/><stop offset="0.12" stop-color="#fff5d3"/><stop offset="0.2" stop-color="#ffeeb8"/><stop offset="0.3" stop-color="#ffe799"/><stop offset="0.42" stop-color="#ffdf78"/><stop offset="0.56" stop-color="#ffd756"/><stop offset="0.72" stop-color="#ffcf33"/><stop offset="0.86" stop-color="#ffc918"/><stop offset="1" stop-color="#ffc300"/></linearGradient><linearGradient id="g40" gradientUnits="userSpaceOnUse" x1="967.7" y1="145.4" x2="983.7" y2="79.9"><stop offset="0" stop-color="#ffffff"/><stop offset="0.06" stop-color="#fffbe9"/><stop offset="0.12" stop-color="#fff8d5"/><stop offset="0.2" stop-color="#fff4bb"/><stop offset="0.3" stop-color="#ffef9d"/><stop offset="0.42" stop-color="#ffea7c"/><stop offset="0.56" stop-color="#ffe459"/><stop offset="0.72" stop-color="#ffde36"/><stop offset="0.86" stop-color="#ffd91a"/><stop offset="1" stop-color="#ffd500"/></linearGradient><linearGradient id="g41" gradientUnits="userSpaceOnUse" x1="967.7" y1="145.4" x2="978.3" y2="79.4"><stop offset="0" stop-color="#ffffff"/><stop offset="0.06" stop-color="#fffdeb"/><stop offset="0.12" stop-color="#fffcd7"/><stop offset="0.2" stop-color="#fffabe"/><stop offset="0.3" stop-color="#fff7a1"/><stop offset="0.42" stop-color="#fff481"/><stop offset="0.56" stop-color="#fff15d"/><stop offset="0.72" stop-color="#ffee39"/><stop offset="0.86" stop-color="#ffec1b"/><stop offset="1" stop-color="#ffe900"/></linearGradient><linearGradient id="g42" gradientUnits="userSpaceOnUse" x1="967.7" y1="145.4" x2="972.9" y2="78.8"><stop offset="0" stop-color="#ffffff"/><stop offset="0.06" stop-color="#ffffec"/><stop offset="0.12" stop-color="#ffffd9"/><stop offset="0.2" stop-color="#ffffc1"/><stop offset="0.3" stop-color="#feffa5"/><stop offset="0.42" stop-color="#feff85"/><stop offset="0.56" stop-color="#feff61"/><stop offset="0.72" stop-color="#feff3c"/><stop offset="0.86" stop-color="#fdff1d"/><stop offset="1" stop-color="#fdff00"/></linearGradient><linearGradient id="g43" gradientUnits="userSpaceOnUse" x1="967.7" y1="145.4" x2="967.6" y2="78.3"><stop offset="0" stop-color="#ffffff"/><stop offset="0.06" stop-color="#fdffeb"/><stop offset="0.12" stop-color="#fbffd8"/><stop offset="0.2" stop-color="#f9ffc0"/><stop offset="0.3" stop-color="#f6ffa4"/><stop offset="0.42" stop-color="#f2ff83"/><stop offset="0.56" stop-color="#efff60"/><stop offset="0.72" stop-color="#ebff3b"/><stop offset="0.86" stop-color="#e8ff1c"/><stop offset="1" stop-color="#e5ff00"/></linearGradient><linearGradient id="g44" gradientUnits="userSpaceOnUse" x1="967.7" y1="145.4" x2="962.2" y2="77.7"><stop offset="0" stop-color="#ffffff"/><stop offset="0.06" stop-color="#fbffeb"/><stop offset="0.12" stop-color="#f7ffd8"/><stop offset="0.2" stop-color="#f3ffbf"/><stop offset="0.3" stop-color="#edffa2"/><stop offset="0.42" stop-color="#e7ff82"/><stop offset="0.56" stop-color="#e0ff5e"/><stop offset="0.72" stop-color="#d9ff3a"/><stop offset="0.86" stop-color="#d3ff1c"/><stop offset="1" stop-color="#ceff00"/></linearGradient><linearGradient id="g45" gradientUnits="userSpaceOnUse" x1="967.7" y1="145.4" x2="956.9" y2="77.1"><stop offset="0" stop-color="#ffffff"/><stop offset="0.06" stop-color="#f9ffeb"/><stop offset="0.12" stop-color="#f4ffd7"/><stop offset="0.2" stop-color="#edffbe"/><stop offset="0.3" stop-color="#e5ffa1"/><stop offset="0.42" stop-color="#dcff80"/><stop offset="0.56" stop-color="#d2ff5d"/><stop offset="0.72" stop-color="#c8ff39"/><stop offset="0.86" stop-color="#c0ff1b"/><stop offset="1" stop-color="#b8ff00"/></linearGradient><linearGradient id="g46" gradientUnits="userSpaceOnUse" x1="967.7" y1="145.4" x2="951.5" y2="76.6"><stop offset="0" stop-color="#ffffff"/><stop offset="0.06" stop-color="#f7ffea"/><stop offset="0.12" stop-color="#f0ffd6"/><stop offset="0.2" stop-color="#e7ffbd"/><stop offset="0.3" stop-color="#ddffa0"/><stop offset="0.42" stop-color="#d1ff7f"/><stop offset="0.56" stop-color="#c4ff5c"/><stop offset="0.72" stop-color="#b7ff38"/><stop offset="0.86" stop-color="#acff1b"/><stop offset="1" stop-color="#a3ff00"/></linearGradient><linearGradient id="g47" gradientUnits="userSpaceOnUse" x1="967.7" y1="145.4" x2="946.1" y2="76.0"><stop offset="0" stop-color="#ffffff"/><stop offset="0.06" stop-color="#f6ffea"/><stop offset="0.12" stop-color="#edffd6"/><stop offset="0.2" stop-color="#e1ffbc"/><stop offset="0.3" stop-color="#d4ff9e"/><stop offset="0.42" stop-color="#c6ff7e"/><stop offset="0.56" stop-color="#b7ff5b"/><stop offset="0.72" stop-color="#a7ff37"/><stop offset="0.86" stop-color="#9aff1a"/><stop offset="1" stop-color="#8fff00"/></linearGradient><linearGradient id="g48" gradientUnits="userSpaceOnUse" x1="967.7" y1="145.4" x2="940.8" y2="75.5"><stop offset="0" stop-color="#ffffff"/><stop offset="0.06" stop-color="#f4ffe9"/><stop offset="0.12" stop-color="#e9ffd5"/><stop offset="0.2" stop-color="#dcffbb"/><stop offset="0.3" stop-color="#ccff9d"/><stop offset="0.42" stop-color="#bbff7c"/><stop offset="0.56" stop-color="#a9ff59"/><stop offset="0.72" stop-color="#97ff36"/><stop offset="0.86" stop-color="#89ff1a"/><stop offset="1" stop-color="#7bff00"/></linearGradient><linearGradient id="g49" gradientUnits="userSpaceOnUse" x1="967.7" y1="145.4" x2="935.4" y2="74.9"><stop offset="0" stop-color="#ffffff"/><stop offset="0.06" stop-color="#f2ffe9"/><stop offset="0.12" stop-color="#e6ffd4"/><stop offset="0.2" stop-color="#d6ffba"/><stop offset="0.3" stop-color="#c5ff9c"/><stop offset="0.42" stop-color="#b1ff7b"/><stop offset="0.56" stop-color="#9dff58"/><stop offset="0.72" stop-color="#88ff35"/><stop offset="0.86" stop-color="#78ff19"/><stop offset="1" stop-color="#69ff00"/></linearGradient><linearGradient id="g50" gradientUnits="userSpaceOnUse" x1="967.7" y1="145.4" x2="930.0" y2="74.4"><stop offset="0" stop-color="#ffffff"/><stop offset="0.06" stop-color="#f0ffe9"/><stop offset="0.12" stop-color="#e2ffd3"/><stop offset="0.2" stop-color="#d1ffb9"/><stop offset="0.3" stop-color="#bdff9b"/><stop offset="0.42" stop-color="#a7ff7a"/><stop offset="0.56" stop-color="#90ff57"/><stop offset="0.72" stop-color="#79ff34"/><stop offset="0.86" stop-color="#67ff19"/><stop offset="1" stop-color="#57ff00"/></linearGradient><linearGradient id="g51" gradientUnits="userSpaceOnUse" x1="967.7" y1="145.4" x2="924.7" y2="73.8"><stop offset="0" stop-color="#ffffff"/><stop offset="0.06" stop-color="#eeffe8"/><stop offset="0.12" stop-color="#dfffd3"/><stop offset="0.2" stop-color="#cbffb8"/><stop offset="0.3" stop-color="#b5ff99"/><stop offset="0.42" stop-color="#9dff78"/><stop offset="0.56" stop-color="#84ff56"/><stop offset="0.72" stop-color="#6bff33"/><stop offset="0.86" stop-color="#57ff18"/><stop offset="1" stop-color="#46ff00"/></linearGradient><linearGradient id="g52" gradientUnits="userSpaceOnUse" x1="967.7" y1="145.4" x2="919.3" y2="73.2"><stop offset="0" stop-color="#ffffff"/><stop offset="0.06" stop-color="#edffe8"/><stop offset="0.12" stop-color="#dbffd2"/><stop offset="0.2" stop-color="#c6ffb7"/><stop offset="0.3" stop-color="#aeff98"/><stop offset="0.42" stop-color="#93ff77"/><stop offset="0.56" stop-color="#78ff55"/><stop offset="0.72" stop-color="#5dff33"/><stop offset="0.86" stop-color="#48ff18"/><stop offset="1" stop-color="#35ff00"/></linearGradient><linearGradient id="g53" gradientUnits="userSpaceOnUse" x1="967.7" y1="145.4" x2="914.0" y2="72.7"><stop offset="0" stop-color="#ffffff"/><stop offset="0.06" stop-color="#ebffe7"/><stop offset="0.12" stop-color="#d8ffd1"/><stop offset="0.2" stop-color="#c1ffb6"/><stop offset="0.3" stop-color="#a6ff97"/><stop offset="0.42" stop-color="#8aff76"/><stop offset="0.56" stop-color="#6dff54"/><stop offset="0.72" stop-color="#50ff32"/><stop offset="0.86" stop-color="#39ff17"/><stop offset="1" stop-color="#25ff00"/></linearGradient><linearGradient id="g54" gradientUnits="userSpaceOnUse" x1="967.7" y1="145.4" x2="908.6" y2="72.1"><stop offset="0" stop-color="#ffffff"/><stop offset="0.06" stop-color="#e9ffe7"/><stop offset="0.12" stop-color="#d5ffd1"/><stop offset="0.2" stop-color="#bbffb5"/><stop offset="0.3" stop-color="#9fff96"/><stop offset="0.42" stop-color="#81ff75"/><stop offset="0.56" stop-color="#62ff53"/><stop offset="0.72" stop-color="#43ff31"/><stop offset="0.86" stop-color="#2bff17"/><stop offset="1" stop-color="#16ff00"/></linearGradient><linearGradient id="g55" gradientUnits="userSpaceOnUse" x1="967.7" y1="145.4" x2="903.2" y2="71.6"><stop offset="0" stop-color="#ffffff"/><stop offset="0.06" stop-color="#e7ffe7"/><stop offset="0.12" stop-color="#d1ffd0"/><stop offset="0.2" stop-color="#b6ffb4"/><stop offset="0.3" stop-color="#98ff95"/><stop offset="0.42" stop-color="#78ff74"/><stop offset="0.56" stop-color="#57ff52"/><stop offset="0.72" stop-color="#36ff30"/><stop offset="0.86" stop-color="#1dff17"/><stop offset="1" stop-color="#07ff00"/></linearGradient><linearGradient id="g56" gradientUnits="userSpaceOnUse" x1="967.7" y1="145.4" x2="901.0" y2="74.1"><stop offset="0" stop-color="#ffffff"/><stop offset="0.06" stop-color="#e7ffe7"/><stop offset="0.12" stop-color="#d0ffd1"/><stop offset="0.2" stop-color="#b4ffb6"/><stop offset="0.3" stop-color="#95ff97"/><stop offset="0.42" stop-color="#74ff77"/><stop offset="0.56" stop-color="#52ff56"/><stop offset="0.72" stop-color="#30ff35"/><stop offset="0.86" stop-color="#17ff1d"/><stop offset="1" stop-color="#00ff07"/></linearGradient><linearGradient id="g57" gradientUnits="userSpaceOnUse" x1="967.7" y1="145.4" x2="901.8" y2="79.8"><stop offset="0" stop-color="#ffffff"/><stop offset="0.06" stop-color="#e7ffe9"/><stop offset="0.12" stop-color="#d1ffd4"/><stop offset="0.2" stop-color="#b5ffbb"/><stop offset="0.3" stop-color="#96ff9e"/><stop offset="0.42" stop-color="#75ff7f"/><stop offset="0.56" stop-color="#53ff60"/><stop offset="0.72" stop-color="#31ff41"/><stop offset="0.86" stop-color="#17ff29"/><stop offset="1" stop-color="#00ff14"/></linearGradient><linearGradient id="g58" gradientUnits="userSpaceOnUse" x1="967.7" y1="145.4" x2="902.6" y2="85.5"><stop offset="0" stop-color="#ffffff"/><stop offset="0.06" stop-color="#e7ffea"/><stop offset="0.12" stop-color="#d1ffd7"/><stop offset="0.2" stop-color="#b6ffbf"/><stop offset="0.3" stop-color="#97ffa5"/><stop offset="0.42" stop-color="#76ff88"/><stop offset="0.56" stop-color="#54ff6a"/><stop offset="0.72" stop-color="#32ff4c"/><stop offset="0.86" stop-color="#17ff36"/><stop offset="1" stop-color="#00ff21"/></linearGradient><linearGradient id="g59" gradientUnits="userSpaceOnUse" x1="967.7" y1="145.4" x2="903.5" y2="91.2"><stop offset="0" stop-color="#ffffff"/><stop offset="0.06" stop-color="#e8ffec"/><stop offset="0.12" stop-color="#d2ffda"/><stop offset="0.2" stop-color="#b7ffc4"/><stop offset="0.3" stop-color="#98ffab"/><stop offset="0.42" stop-color="#77ff90"/><stop offset="0.56" stop-color="#55ff74"/><stop offset="0.72" stop-color="#33ff58"/><stop offset="0.86" stop-color="#18ff43"/><stop offset="1" stop-color="#00ff2f"/></linearGradient><linearGradient id="g60" gradientUnits="userSpaceOnUse" x1="967.7" y1="145.4" x2="904.3" y2="96.9"><stop offset="0" stop-color="#ffffff"/><stop offset="0.06" stop-color="#e8ffee"/><stop offset="0.12" stop-color="#d3ffdd"/><stop offset="0.2" stop-color="#b8ffc9"/><stop offset="0.3" stop-color="#99ffb2"/><stop offset="0.42" stop-color="#78ff99"/><stop offset="0.56" stop-color="#56ff7f"/><stop offset="0.72" stop-color="#33ff65"/><stop offset="0.86" stop-color="#18ff50"/><stop offset="1" stop-color="#00ff3e"/></linearGradient><linearGradient id="g61" gradientUnits="userSpaceOnUse" x1="967.7" y1="145.4" x2="905.1" y2="102.6"><stop offset="0" stop-color="#ffffff"/><stop offset="0.06" stop-color="#e9ffef"/><stop offset="0.12" stop-color="#d3ffe1"/><stop offset="0.2" stop-color="#b9ffce"/><stop offset="0.3" stop-color="#9bffb9"/><stop offset="0.42" stop-color="#7affa2"/><stop offset="0.56" stop-color="#57ff8a"/><stop offset="0.72" stop-color="#34ff72"/><stop offset="0.86" stop-color="#19ff5e"/><stop offset="1" stop-color="#00ff4d"/></linearGradient><linearGradient id="g62" gradientUnits="userSpaceOnUse" x1="967.7" y1="145.4" x2="905.9" y2="108.2"><stop offset="0" stop-color="#ffffff"/><stop offset="0.06" stop-color="#e9fff1"/><stop offset="0.12" stop-color="#d4ffe4"/><stop offset="0.2" stop-color="#baffd3"/><stop offset="0.3" stop-color="#9cffc0"/><stop offset="0.42" stop-color="#7bffab"/><stop offset="0.56" stop-color="#58ff95"/><stop offset="0.72" stop-color="#35ff7f"/><stop offset="0.86" stop-color="#19ff6d"/><stop offset="1" stop-color="#00ff5d"/></linearGradient><linearGradient id="g63" gradientUnits="userSpaceOnUse" x1="967.7" y1="145.4" x2="906.8" y2="113.9"><stop offset="0" stop-color="#ffffff"/><stop offset="0.06" stop-color="#e9fff3"/><stop offset="0.12" stop-color="#d5ffe7"/><stop offset="0.2" stop-color="#bbffd8"/><stop offset="0.3" stop-color="#9dffc7"/><stop offset="0.42" stop-color="#7cffb4"/><stop offset="0.56" stop-color="#59ffa1"/><stop offset="0.72" stop-color="#36ff8c"/><stop offset="0.86" stop-color="#1aff7c"/><stop offset="1" stop-color="#00ff6e"/></linearGradient><linearGradient id="g64" gradientUnits="userSpaceOnUse" x1="967.7" y1="145.4" x2="907.6" y2="119.6"><stop offset="0" stop-color="#ffffff"/><stop offset="0.06" stop-color="#eafff4"/><stop offset="0.12" stop-color="#d6ffea"/><stop offset="0.2" stop-color="#bcffdd"/><stop offset="0.3" stop-color="#9effce"/><stop offset="0.42" stop-color="#7effbe"/><stop offset="0.56" stop-color="#5bffac"/><stop offset="0.72" stop-color="#37ff9a"/><stop offset="0.86" stop-color="#1aff8c"/><stop offset="1" stop-color="#00ff7f"/></linearGradient><linearGradient id="g65" gradientUnits="userSpaceOnUse" x1="967.7" y1="145.4" x2="908.4" y2="125.3"><stop offset="0" stop-color="#ffffff"/><stop offset="0.06" stop-color="#eafff6"/><stop offset="0.12" stop-color="#d6ffed"/><stop offset="0.2" stop-color="#bdffe3"/><stop offset="0.3" stop-color="#a0ffd6"/><stop offset="0.42" stop-color="#7fffc8"/><stop offset="0.56" stop-color="#5cffb9"/><stop offset="0.72" stop-color="#38ffa9"/><stop offset="0.86" stop-color="#1bff9c"/><stop offset="1" stop-color="#00ff91"/></linearGradient><linearGradient id="g66" gradientUnits="userSpaceOnUse" x1="967.7" y1="145.4" x2="909.3" y2="131.0"><stop offset="0" stop-color="#ffffff"/><stop offset="0.06" stop-color="#ebfff8"/><stop offset="0.12" stop-color="#d7fff1"/><stop offset="0.2" stop-color="#beffe8"/><stop offset="0.3" stop-color="#a1ffdd"/><stop offset="0.42" stop-color="#80ffd2"/><stop offset="0.56" stop-color="#5dffc5"/><stop offset="0.72" stop-color="#39ffb8"/><stop offset="0.86" stop-color="#1bffad"/><stop offset="1" stop-color="#00ffa4"/></linearGradient><linearGradient id="g67" gradientUnits="userSpaceOnUse" x1="967.7" y1="145.4" x2="910.1" y2="136.7"><stop offset="0" stop-color="#ffffff"/><stop offset="0.06" stop-color="#ebfff9"/><stop offset="0.12" stop-color="#d8fff4"/><stop offset="0.2" stop-color="#bfffed"/><stop offset="0.3" stop-color="#a2ffe5"/><stop offset="0.42" stop-color="#82ffdc"/><stop offset="0.56" stop-color="#5effd2"/><stop offset="0.72" stop-color="#3affc7"/><stop offset="0.86" stop-color="#1cffbf"/><stop offset="1" stop-color="#00ffb7"/></linearGradient><linearGradient id="g68" gradientUnits="userSpaceOnUse" x1="967.7" y1="145.4" x2="910.9" y2="142.3"><stop offset="0" stop-color="#ffffff"/><stop offset="0.06" stop-color="#ebfffb"/><stop offset="0.12" stop-color="#d8fff7"/><stop offset="0.2" stop-color="#c0fff2"/><stop offset="0.3" stop-color="#a4ffed"/><stop offset="0.42" stop-color="#83ffe6"/><stop offset="0.56" stop-color="#60ffdf"/><stop offset="0.72" stop-color="#3bffd8"/><stop offset="0.86" stop-color="#1cffd1"/><stop offset="1" stop-color="#00ffcc"/></linearGradient><linearGradient id="g69" gradientUnits="userSpaceOnUse" x1="967.7" y1="145.4" x2="911.8" y2="148.0"><stop offset="0" stop-color="#ffffff"/><stop offset="0.06" stop-color="#ecfffd"/><stop offset="0.12" stop-color="#d9fffb"/><stop offset="0.2" stop-color="#c1fff8"/><stop offset="0.3" stop-color="#a5fff5"/><stop offset="0.42" stop-color="#85fff1"/><stop offset="0.56" stop-color="#61ffed"/><stop offset="0.72" stop-color="#3cffe8"/><stop offset="0.86" stop-color="#1dffe5"/><stop offset="1" stop-color="#00ffe1"/></linearGradient><linearGradient id="g70" gradientUnits="userSpaceOnUse" x1="967.7" y1="145.4" x2="912.6" y2="153.7"><stop offset="0" stop-color="#ffffff"/><stop offset="0.06" stop-color="#ecfffe"/><stop offset="0.12" stop-color="#dafffe"/><stop offset="0.2" stop-color="#c2fffd"/><stop offset="0.3" stop-color="#a6fffc"/><stop offset="0.42" stop-color="#86fffc"/><stop offset="0.56" stop-color="#63fffb"/><stop offset="0.72" stop-color="#3dfffa"/><stop offset="0.86" stop-color="#1dfff9"/><stop offset="1" stop-color="#00fff8"/></linearGradient><linearGradient id="g71" gradientUnits="userSpaceOnUse" x1="967.7" y1="145.4" x2="913.4" y2="159.4"><stop offset="0" stop-color="#ffffff"/><stop offset="0.06" stop-color="#ecfeff"/><stop offset="0.12" stop-color="#d9fdff"/><stop offset="0.2" stop-color="#c1fbff"/><stop offset="0.3" stop-color="#a4f9ff"/><stop offset="0.42" stop-color="#84f8ff"/><stop offset="0.56" stop-color="#60f5ff"/><stop offset="0.72" stop-color="#3bf3ff"/><stop offset="0.86" stop-color="#1df1ff"/><stop offset="1" stop-color="#00f0ff"/></linearGradient><linearGradient id="g72" gradientUnits="userSpaceOnUse" x1="967.7" y1="145.4" x2="914.3" y2="165.1"><stop offset="0" stop-color="#ffffff"/><stop offset="0.06" stop-color="#eafcff"/><stop offset="0.12" stop-color="#d7f9ff"/><stop offset="0.2" stop-color="#bef6ff"/><stop offset="0.3" stop-color="#a0f2ff"/><stop offset="0.42" stop-color="#80edff"/><stop offset="0.56" stop-color="#5de8ff"/><stop offset="0.72" stop-color="#38e3ff"/><stop offset="0.86" stop-color="#1bdfff"/><stop offset="1" stop-color="#00dcff"/></linearGradient><linearGradient id="g73" gradientUnits="userSpaceOnUse" x1="967.7" y1="145.4" x2="915.1" y2="170.8"><stop offset="0" stop-color="#ffffff"/><stop offset="0.06" stop-color="#e9faff"/><stop offset="0.12" stop-color="#d5f6ff"/><stop offset="0.2" stop-color="#bbf1ff"/><stop offset="0.3" stop-color="#9deaff"/><stop offset="0.42" stop-color="#7ce4ff"/><stop offset="0.56" stop-color="#59dcff"/><stop offset="0.72" stop-color="#36d5ff"/><stop offset="0.86" stop-color="#1acfff"/><stop offset="1" stop-color="#00caff"/></linearGradient><linearGradient id="g74" gradientUnits="userSpaceOnUse" x1="967.7" y1="145.4" x2="915.9" y2="176.4"><stop offset="0" stop-color="#ffffff"/><stop offset="0.06" stop-color="#e8f9ff"/><stop offset="0.12" stop-color="#d3f3ff"/><stop offset="0.2" stop-color="#b8ecff"/><stop offset="0.3" stop-color="#99e3ff"/><stop offset="0.42" stop-color="#78dbff"/><stop offset="0.56" stop-color="#56d1ff"/><stop offset="0.72" stop-color="#33c8ff"/><stop offset="0.86" stop-color="#18c0ff"/><stop offset="1" stop-color="#00baff"/></linearGradient><linearGradient id="g75" gradientUnits="userSpaceOnUse" x1="967.7" y1="145.4" x2="916.7" y2="182.1"><stop offset="0" stop-color="#ffffff"/><stop offset="0.06" stop-color="#e7f7ff"/><stop offset="0.12" stop-color="#d1f0ff"/><stop offset="0.2" stop-color="#b5e7ff"/><stop offset="0.3" stop-color="#96ddff"/><stop offset="0.42" stop-color="#75d2ff"/><stop offset="0.56" stop-color="#53c7ff"/><stop offset="0.72" stop-color="#31bcff"/><stop offset="0.86" stop-color="#17b3ff"/><stop offset="1" stop-color="#00acff"/></linearGradient><linearGradient id="g76" gradientUnits="userSpaceOnUse" x1="967.7" y1="145.4" x2="917.6" y2="187.8"><stop offset="0" stop-color="#ffffff"/><stop offset="0.06" stop-color="#e6f6ff"/><stop offset="0.12" stop-color="#cfedff"/><stop offset="0.2" stop-color="#b3e2ff"/><stop offset="0.3" stop-color="#93d6ff"/><stop offset="0.42" stop-color="#72caff"/><stop offset="0.56" stop-color="#50bdff"/><stop offset="0.72" stop-color="#2fb1ff"/><stop offset="0.86" stop-color="#16a7ff"/><stop offset="1" stop-color="#009fff"/></linearGradient><linearGradient id="g77" gradientUnits="userSpaceOnUse" x1="967.7" y1="145.4" x2="918.4" y2="193.5"><stop offset="0" stop-color="#ffffff"/><stop offset="0.06" stop-color="#e5f4ff"/><stop offset="0.12" stop-color="#cdeaff"/><stop offset="0.2" stop-color="#b0deff"/><stop offset="0.3" stop-color="#90d0ff"/><stop offset="0.42" stop-color="#6fc2ff"/><stop offset="0.56" stop-color="#4eb4ff"/><stop offset="0.72" stop-color="#2da6ff"/><stop offset="0.86" stop-color="#159cff"/><stop offset="1" stop-color="#0093ff"/></linearGradient><linearGradient id="g78" gradientUnits="userSpaceOnUse" x1="967.7" y1="145.4" x2="919.2" y2="199.2"><stop offset="0" stop-color="#ffffff"/><stop offset="0.06" stop-color="#e4f2ff"/><stop offset="0.12" stop-color="#cbe7ff"/><stop offset="0.2" stop-color="#aed9ff"/><stop offset="0.3" stop-color="#8dcaff"/><stop offset="0.42" stop-color="#6cbbff"/><stop offset="0.56" stop-color="#4babff"/><stop offset="0.72" stop-color="#2c9dff"/><stop offset="0.86" stop-color="#1492ff"/><stop offset="1" stop-color="#0089ff"/></linearGradient><linearGradient id="g79" gradientUnits="userSpaceOnUse" x1="967.7" y1="145.4" x2="920.1" y2="204.9"><stop offset="0" stop-color="#ffffff"/><stop offset="0.06" stop-color="#e3f1ff"/><stop offset="0.12" stop-color="#c9e4ff"/><stop offset="0.2" stop-color="#abd5ff"/><stop offset="0.3" stop-color="#8bc4ff"/><stop offset="0.42" stop-color="#69b4ff"/><stop offset="0.56" stop-color="#49a3ff"/><stop offset="0.72" stop-color="#2a94ff"/><stop offset="0.86" stop-color="#1489ff"/><stop offset="1" stop-color="#007fff"/></linearGradient><linearGradient id="g80" gradientUnits="userSpaceOnUse" x1="967.7" y1="145.4" x2="920.9" y2="210.5"><stop offset="0" stop-color="#ffffff"/><stop offset="0.06" stop-color="#e2efff"/><stop offset="0.12" stop-color="#c7e1ff"/><stop offset="0.2" stop-color="#a9d1ff"/><stop offset="0.3" stop-color="#88bfff"/><stop offset="0.42" stop-color="#67adff"/><stop offset="0.56" stop-color="#479cff"/><stop offset="0.72" stop-color="#298cff"/><stop offset="0.86" stop-color="#1380ff"/><stop offset="1" stop-color="#0076ff"/></linearGradient><linearGradient id="g81" gradientUnits="userSpaceOnUse" x1="967.7" y1="145.4" x2="921.7" y2="216.2"><stop offset="0" stop-color="#ffffff"/><stop offset="0.06" stop-color="#e1eeff"/><stop offset="0.12" stop-color="#c6deff"/><stop offset="0.2" stop-color="#a6cdff"/><stop offset="0.3" stop-color="#85baff"/><stop offset="0.42" stop-color="#64a7ff"/><stop offset="0.56" stop-color="#4595ff"/><stop offset="0.72" stop-color="#2784ff"/><stop offset="0.86" stop-color="#1278ff"/><stop offset="1" stop-color="#006eff"/></linearGradient><linearGradient id="g82" gradientUnits="userSpaceOnUse" x1="967.7" y1="145.4" x2="922.6" y2="221.9"><stop offset="0" stop-color="#ffffff"/><stop offset="0.06" stop-color="#dfecff"/><stop offset="0.12" stop-color="#c4dcff"/><stop offset="0.2" stop-color="#a4c9ff"/><stop offset="0.3" stop-color="#83b5ff"/><stop offset="0.42" stop-color="#62a1ff"/><stop offset="0.56" stop-color="#438eff"/><stop offset="0.72" stop-color="#267dff"/><stop offset="0.86" stop-color="#1171ff"/><stop offset="1" stop-color="#0066ff"/></linearGradient><linearGradient id="g83" gradientUnits="userSpaceOnUse" x1="967.7" y1="145.4" x2="923.4" y2="227.6"><stop offset="0" stop-color="#ffffff"/><stop offset="0.06" stop-color="#deebff"/><stop offset="0.12" stop-color="#c2d9ff"/><stop offset="0.2" stop-color="#a2c5ff"/><stop offset="0.3" stop-color="#81b0ff"/><stop offset="0.42" stop-color="#609bff"/><stop offset="0.56" stop-color="#4188ff"/><stop offset="0.72" stop-color="#2576ff"/><stop offset="0.86" stop-color="#116aff"/><stop offset="1" stop-color="#005fff"/></linearGradient><linearGradient id="g84" gradientUnits="userSpaceOnUse" x1="967.7" y1="145.4" x2="924.2" y2="233.3"><stop offset="0" stop-color="#ffffff"/><stop offset="0.06" stop-color="#dde9ff"/><stop offset="0.12" stop-color="#c1d6ff"/><stop offset="0.2" stop-color="#a0c1ff"/><stop offset="0.3" stop-color="#7eabff"/><stop offset="0.42" stop-color="#5e96ff"/><stop offset="0.56" stop-color="#3f82ff"/><stop offset="0.72" stop-color="#2470ff"/><stop offset="0.86" stop-color="#1063ff"/><stop offset="1" stop-color="#0059ff"/></linearGradient><linearGradient id="g85" gradientUnits="userSpaceOnUse" x1="967.7" y1="145.4" x2="925.0" y2="239.0"><stop offset="0" stop-color="#ffffff"/><stop offset="0.06" stop-color="#dce8ff"/><stop offset="0.12" stop-color="#bfd4ff"/><stop offset="0.2" stop-color="#9ebdff"/><stop offset="0.3" stop-color="#7ca6ff"/><stop offset="0.42" stop-color="#5c90ff"/><stop offset="0.56" stop-color="#3e7cff"/><stop offset="0.72" stop-color="#236aff"/><stop offset="0.86" stop-color="#105dff"/><stop offset="1" stop-color="#0052ff"/></linearGradient><linearGradient id="g86" gradientUnits="userSpaceOnUse" x1="967.7" y1="145.4" x2="925.9" y2="244.6"><stop offset="0" stop-color="#ffffff"/><stop offset="0.06" stop-color="#dbe6ff"/><stop offset="0.12" stop-color="#bdd1ff"/><stop offset="0.2" stop-color="#9cbaff"/><stop offset="0.3" stop-color="#7aa2ff"/><stop offset="0.42" stop-color="#5a8bff"/><stop offset="0.56" stop-color="#3c77ff"/><stop offset="0.72" stop-color="#2264ff"/><stop offset="0.86" stop-color="#0f57ff"/><stop offset="1" stop-color="#004dff"/></linearGradient><linearGradient id="g87" gradientUnits="userSpaceOnUse" x1="967.7" y1="145.4" x2="926.7" y2="250.3"><stop offset="0" stop-color="#ffffff"/><stop offset="0.06" stop-color="#dae5ff"/><stop offset="0.12" stop-color="#bccfff"/><stop offset="0.2" stop-color="#9ab6ff"/><stop offset="0.3" stop-color="#789eff"/><stop offset="0.42" stop-color="#5887ff"/><stop offset="0.56" stop-color="#3b72ff"/><stop offset="0.72" stop-color="#215fff"/><stop offset="0.86" stop-color="#0f52ff"/><stop offset="1" stop-color="#0047ff"/></linearGradient><linearGradient id="g88" gradientUnits="userSpaceOnUse" x1="967.7" y1="145.4" x2="927.5" y2="256.0"><stop offset="0" stop-color="#ffffff"/><stop offset="0.06" stop-color="#d9e3ff"/><stop offset="0.12" stop-color="#baccff"/><stop offset="0.2" stop-color="#98b3ff"/><stop offset="0.3" stop-color="#769aff"/><stop offset="0.42" stop-color="#5682ff"/><stop offset="0.56" stop-color="#396dff"/><stop offset="0.72" stop-color="#205aff"/><stop offset="0.86" stop-color="#0e4dff"/><stop offset="1" stop-color="#0042ff"/></linearGradient><linearGradient id="g89" gradientUnits="userSpaceOnUse" x1="967.7" y1="145.4" x2="928.4" y2="261.7"><stop offset="0" stop-color="#ffffff"/><stop offset="0.06" stop-color="#d8e2ff"/><stop offset="0.12" stop-color="#b9caff"/><stop offset="0.2" stop-color="#96afff"/><stop offset="0.3" stop-color="#7496ff"/><stop offset="0.42" stop-color="#547eff"/><stop offset="0.56" stop-color="#3868ff"/><stop offset="0.72" stop-color="#1f55ff"/><stop offset="0.86" stop-color="#0e48ff"/><stop offset="1" stop-color="#003eff"/></linearGradient><linearGradient id="g90" gradientUnits="userSpaceOnUse" x1="967.7" y1="145.4" x2="929.2" y2="267.4"><stop offset="0" stop-color="#ffffff"/><stop offset="0.06" stop-color="#d7e0ff"/><stop offset="0.12" stop-color="#b7c7ff"/><stop offset="0.2" stop-color="#94acff"/><stop offset="0.3" stop-color="#7292ff"/><stop offset="0.42" stop-color="#5379ff"/><stop offset="0.56" stop-color="#3764ff"/><stop offset="0.72" stop-color="#1e51ff"/><stop offset="0.86" stop-color="#0e44ff"/><stop offset="1" stop-color="#0039ff"/></linearGradient><linearGradient id="g91" gradientUnits="userSpaceOnUse" x1="967.7" y1="145.4" x2="930.0" y2="273.1"><stop offset="0" stop-color="#ffffff"/><stop offset="0.06" stop-color="#d6dfff"/><stop offset="0.12" stop-color="#b6c5ff"/><stop offset="0.2" stop-color="#93a9ff"/><stop offset="0.3" stop-color="#708eff"/><stop offset="0.42" stop-color="#5175ff"/><stop offset="0.56" stop-color="#355fff"/><stop offset="0.72" stop-color="#1e4cff"/><stop offset="0.86" stop-color="#0d3fff"/><stop offset="1" stop-color="#0035ff"/></linearGradient><linearGradient id="g92" gradientUnits="userSpaceOnUse" x1="967.7" y1="145.4" x2="930.9" y2="278.7"><stop offset="0" stop-color="#ffffff"/><stop offset="0.06" stop-color="#d6ddff"/><stop offset="0.12" stop-color="#b4c3ff"/><stop offset="0.2" stop-color="#91a6ff"/><stop offset="0.3" stop-color="#6f8aff"/><stop offset="0.42" stop-color="#5071ff"/><stop offset="0.56" stop-color="#345bff"/><stop offset="0.72" stop-color="#1d48ff"/><stop offset="0.86" stop-color="#0d3bff"/><stop offset="1" stop-color="#0031ff"/></linearGradient><linearGradient id="g93" gradientUnits="userSpaceOnUse" x1="967.7" y1="145.4" x2="931.7" y2="284.4"><stop offset="0" stop-color="#ffffff"/><stop offset="0.06" stop-color="#d5dcff"/><stop offset="0.12" stop-color="#b3c0ff"/><stop offset="0.2" stop-color="#8fa3ff"/><stop offset="0.3" stop-color="#6d87ff"/><stop offset="0.42" stop-color="#4e6dff"/><stop offset="0.56" stop-color="#3357ff"/><stop offset="0.72" stop-color="#1c44ff"/><stop offset="0.86" stop-color="#0d38ff"/><stop offset="1" stop-color="#002dff"/></linearGradient><linearGradient id="g94" gradientUnits="userSpaceOnUse" x1="967.7" y1="145.4" x2="932.5" y2="290.1"><stop offset="0" stop-color="#ffffff"/><stop offset="0.06" stop-color="#d4dbff"/><stop offset="0.12" stop-color="#b1beff"/><stop offset="0.2" stop-color="#8da0ff"/><stop offset="0.3" stop-color="#6b83ff"/><stop offset="0.42" stop-color="#4d6aff"/><stop offset="0.56" stop-color="#3254ff"/><stop offset="0.72" stop-color="#1c41ff"/><stop offset="0.86" stop-color="#0c34ff"/><stop offset="1" stop-color="#002aff"/></linearGradient><linearGradient id="g95" gradientUnits="userSpaceOnUse" x1="967.7" y1="145.4" x2="933.4" y2="295.8"><stop offset="0" stop-color="#ffffff"/><stop offset="0.06" stop-color="#d3d9ff"/><stop offset="0.12" stop-color="#b0bcff"/><stop offset="0.2" stop-color="#8c9dff"/><stop offset="0.3" stop-color="#6a80ff"/><stop offset="0.42" stop-color="#4b66ff"/><stop offset="0.56" stop-color="#3150ff"/><stop offset="0.72" stop-color="#1b3dff"/><stop offset="0.86" stop-color="#0c31ff"/><stop offset="1" stop-color="#0026ff"/></linearGradient><linearGradient id="g96" gradientUnits="userSpaceOnUse" x1="967.7" y1="145.4" x2="934.2" y2="301.5"><stop offset="0" stop-color="#ffffff"/><stop offset="0.06" stop-color="#d2d8ff"/><stop offset="0.12" stop-color="#afbaff"/><stop offset="0.2" stop-color="#8a9aff"/><stop offset="0.3" stop-color="#687dff"/><stop offset="0.42" stop-color="#4a63ff"/><stop offset="0.56" stop-color="#304dff"/><stop offset="0.72" stop-color="#1a3aff"/><stop offset="0.86" stop-color="#0c2dff"/><stop offset="1" stop-color="#0023ff"/></linearGradient><linearGradient id="g97" gradientUnits="userSpaceOnUse" x1="967.7" y1="145.4" x2="935.0" y2="307.2"><stop offset="0" stop-color="#ffffff"/><stop offset="0.06" stop-color="#d1d7ff"/><stop offset="0.12" stop-color="#adb8ff"/><stop offset="0.2" stop-color="#8998ff"/><stop offset="0.3" stop-color="#677aff"/><stop offset="0.42" stop-color="#4960ff"/><stop offset="0.56" stop-color="#2f49ff"/><stop offset="0.72" stop-color="#1a37ff"/><stop offset="0.86" stop-color="#0b2aff"/><stop offset="1" stop-color="#0020ff"/></linearGradient><linearGradient id="g98" gradientUnits="userSpaceOnUse" x1="967.7" y1="145.4" x2="935.8" y2="312.8"><stop offset="0" stop-color="#ffffff"/><stop offset="0.06" stop-color="#d0d5ff"/><stop offset="0.12" stop-color="#acb5ff"/><stop offset="0.2" stop-color="#8795ff"/><stop offset="0.3" stop-color="#6577ff"/><stop offset="0.42" stop-color="#475cff"/><stop offset="0.56" stop-color="#2e46ff"/><stop offset="0.72" stop-color="#1933ff"/><stop offset="0.86" stop-color="#0b27ff"/><stop offset="1" stop-color="#001dff"/></linearGradient><linearGradient id="g99" gradientUnits="userSpaceOnUse" x1="967.7" y1="145.4" x2="936.7" y2="318.5"><stop offset="0" stop-color="#ffffff"/><stop offset="0.06" stop-color="#cfd4ff"/><stop offset="0.12" stop-color="#abb3ff"/><stop offset="0.2" stop-color="#8692ff"/><stop offset="0.3" stop-color="#6474ff"/><stop offset="0.42" stop-color="#4659ff"/><stop offset="0.56" stop-color="#2d43ff"/><stop offset="0.72" stop-color="#1930ff"/><stop offset="0.86" stop-color="#0b24ff"/><stop offset="1" stop-color="#001aff"/></linearGradient><linearGradient id="g100" gradientUnits="userSpaceOnUse" x1="967.7" y1="145.4" x2="937.5" y2="324.2"><stop offset="0" stop-color="#ffffff"/><stop offset="0.06" stop-color="#ced3ff"/><stop offset="0.12" stop-color="#a9b1ff"/><stop offset="0.2" stop-color="#8490ff"/><stop offset="0.3" stop-color="#6271ff"/><stop offset="0.42" stop-color="#4556ff"/><stop offset="0.56" stop-color="#2d40ff"/><stop offset="0.72" stop-color="#182eff"/><stop offset="0.86" stop-color="#0b21ff"/><stop offset="1" stop-color="#0018ff"/></linearGradient><linearGradient id="g101" gradientUnits="userSpaceOnUse" x1="967.7" y1="145.4" x2="938.3" y2="329.9"><stop offset="0" stop-color="#ffffff"/><stop offset="0.06" stop-color="#cdd1ff"/><stop offset="0.12" stop-color="#a8afff"/><stop offset="0.2" stop-color="#838dff"/><stop offset="0.3" stop-color="#616eff"/><stop offset="0.42" stop-color="#4454ff"/><stop offset="0.56" stop-color="#2c3dff"/><stop offset="0.72" stop-color="#182bff"/><stop offset="0.86" stop-color="#0a1fff"/><stop offset="1" stop-color="#0015ff"/></linearGradient><linearGradient id="g102" gradientUnits="userSpaceOnUse" x1="967.7" y1="145.4" x2="939.2" y2="335.6"><stop offset="0" stop-color="#ffffff"/><stop offset="0.06" stop-color="#ccd0ff"/><stop offset="0.12" stop-color="#a7adff"/><stop offset="0.2" stop-color="#818bff"/><stop offset="0.3" stop-color="#606bff"/><stop offset="0.42" stop-color="#4351ff"/><stop offset="0.56" stop-color="#2b3bff"/><stop offset="0.72" stop-color="#1728ff"/><stop offset="0.86" stop-color="#0a1cff"/><stop offset="1" stop-color="#0013ff"/></linearGradient><linearGradient id="g103" gradientUnits="userSpaceOnUse" x1="967.7" y1="145.4" x2="940.0" y2="341.3"><stop offset="0" stop-color="#ffffff"/><stop offset="0.06" stop-color="#cccfff"/><stop offset="0.12" stop-color="#a6abff"/><stop offset="0.2" stop-color="#8088ff"/><stop offset="0.3" stop-color="#5f69ff"/><stop offset="0.42" stop-color="#424eff"/><stop offset="0.56" stop-color="#2a38ff"/><stop offset="0.72" stop-color="#1726ff"/><stop offset="0.86" stop-color="#0a1aff"/><stop offset="1" stop-color="#0010ff"/></linearGradient><linearGradient id="g104" gradientUnits="userSpaceOnUse" x1="967.7" y1="145.4" x2="940.8" y2="346.9"><stop offset="0" stop-color="#ffffff"/><stop offset="0.06" stop-color="#cbceff"/><stop offset="0.12" stop-color="#a4a9ff"/><stop offset="0.2" stop-color="#7f86ff"/><stop offset="0.3" stop-color="#5d66ff"/><stop offset="0.42" stop-color="#414bff"/><stop offset="0.56" stop-color="#2935ff"/><stop offset="0.72" stop-color="#1623ff"/><stop offset="0.86" stop-color="#0a17ff"/><stop offset="1" stop-color="#000eff"/></linearGradient><linearGradient id="g105" gradientUnits="userSpaceOnUse" x1="967.7" y1="145.4" x2="941.7" y2="352.6"><stop offset="0" stop-color="#ffffff"/><stop offset="0.06" stop-color="#caccff"/><stop offset="0.12" stop-color="#a3a7ff"/><stop offset="0.2" stop-color="#7d84ff"/><stop offset="0.3" stop-color="#5c64ff"/><stop offset="0.42" stop-color="#4049ff"/><stop offset="0.56" stop-color="#2933ff"/><stop offset="0.72" stop-color="#1621ff"/><stop offset="0.86" stop-color="#0a15ff"/><stop offset="1" stop-color="#000cff"/></linearGradient><linearGradient id="g106" gradientUnits="userSpaceOnUse" x1="967.7" y1="145.4" x2="942.5" y2="358.3"><stop offset="0" stop-color="#ffffff"/><stop offset="0.06" stop-color="#c9cbff"/><stop offset="0.12" stop-color="#a2a6ff"/><stop offset="0.2" stop-color="#7c81ff"/><stop offset="0.3" stop-color="#5b61ff"/><stop offset="0.42" stop-color="#3f46ff"/><stop offset="0.56" stop-color="#2831ff"/><stop offset="0.72" stop-color="#161fff"/><stop offset="0.86" stop-color="#0913ff"/><stop offset="1" stop-color="#000aff"/></linearGradient><linearGradient id="g107" gradientUnits="userSpaceOnUse" x1="967.7" y1="145.4" x2="943.3" y2="364.0"><stop offset="0" stop-color="#ffffff"/><stop offset="0.06" stop-color="#c8caff"/><stop offset="0.12" stop-color="#a1a4ff"/><stop offset="0.2" stop-color="#7b7fff"/><stop offset="0.3" stop-color="#5a5fff"/><stop offset="0.42" stop-color="#3e44ff"/><stop offset="0.56" stop-color="#272eff"/><stop offset="0.72" stop-color="#151dff"/><stop offset="0.86" stop-color="#0911ff"/><stop offset="1" stop-color="#0008ff"/></linearGradient><linearGradient id="g108" gradientUnits="userSpaceOnUse" x1="967.7" y1="145.4" x2="944.1" y2="369.7"><stop offset="0" stop-color="#ffffff"/><stop offset="0.06" stop-color="#c7c9ff"/><stop offset="0.12" stop-color="#a0a2ff"/><stop offset="0.2" stop-color="#7a7dff"/><stop offset="0.3" stop-color="#595dff"/><stop offset="0.42" stop-color="#3d42ff"/><stop offset="0.56" stop-color="#272cff"/><stop offset="0.72" stop-color="#151aff"/><stop offset="0.86" stop-color="#090fff"/><stop offset="1" stop-color="#0006ff"/></linearGradient><linearGradient id="g109" gradientUnits="userSpaceOnUse" x1="967.7" y1="145.4" x2="945.0" y2="375.4"><stop offset="0" stop-color="#ffffff"/><stop offset="0.06" stop-color="#c6c7ff"/><stop offset="0.12" stop-color="#9fa0ff"/><stop offset="0.2" stop-color="#797bff"/><stop offset="0.3" stop-color="#585aff"/><stop offset="0.42" stop-color="#3c40ff"/><stop offset="0.56" stop-color="#262aff"/><stop offset="0.72" stop-color="#1418ff"/><stop offset="0.86" stop-color="#090dff"/><stop offset="1" stop-color="#0004ff"/></linearGradient><linearGradient id="g110" gradientUnits="userSpaceOnUse" x1="967.7" y1="145.4" x2="945.8" y2="381.0"><stop offset="0" stop-color="#ffffff"/><stop offset="0.06" stop-color="#c6c6ff"/><stop offset="0.12" stop-color="#9d9eff"/><stop offset="0.2" stop-color="#7779ff"/><stop offset="0.3" stop-color="#5658ff"/><stop offset="0.42" stop-color="#3b3dff"/><stop offset="0.56" stop-color="#2628ff"/><stop offset="0.72" stop-color="#1416ff"/><stop offset="0.86" stop-color="#090bff"/><stop offset="1" stop-color="#0003ff"/></linearGradient><linearGradient id="g111" gradientUnits="userSpaceOnUse" x1="967.7" y1="145.4" x2="946.6" y2="386.7"><stop offset="0" stop-color="#ffffff"/><stop offset="0.06" stop-color="#c5c5ff"/><stop offset="0.12" stop-color="#9c9dff"/><stop offset="0.2" stop-color="#7677ff"/><stop offset="0.3" stop-color="#5556ff"/><stop offset="0.42" stop-color="#3b3bff"/><stop offset="0.56" stop-color="#2526ff"/><stop offset="0.72" stop-color="#1415ff"/><stop offset="0.86" stop-color="#0909ff"/><stop offset="1" stop-color="#0001ff"/></linearGradient><linearGradient id="g112" gradientUnits="userSpaceOnUse" x1="967.7" y1="145.4" x2="949.3" y2="387.0"><stop offset="0" stop-color="#ffffff"/><stop offset="0.06" stop-color="#c5c5ff"/><stop offset="0.12" stop-color="#9d9cff"/><stop offset="0.2" stop-color="#7876ff"/><stop offset="0.3" stop-color="#5755ff"/><stop offset="0.42" stop-color="#3d3bff"/><stop offset="0.56" stop-color="#2725ff"/><stop offset="0.72" stop-color="#1614ff"/><stop offset="0.86" stop-color="#0b09ff"/><stop offset="1" stop-color="#0300ff"/></linearGradient><linearGradient id="g113" gradientUnits="userSpaceOnUse" x1="967.7" y1="145.4" x2="953.9" y2="381.9"><stop offset="0" stop-color="#ffffff"/><stop offset="0.06" stop-color="#c7c6ff"/><stop offset="0.12" stop-color="#a09dff"/><stop offset="0.2" stop-color="#7c77ff"/><stop offset="0.3" stop-color="#5c56ff"/><stop offset="0.42" stop-color="#413bff"/><stop offset="0.56" stop-color="#2c26ff"/><stop offset="0.72" stop-color="#1b14ff"/><stop offset="0.86" stop-color="#1009ff"/><stop offset="1" stop-color="#0800ff"/></linearGradient><linearGradient id="g114" gradientUnits="userSpaceOnUse" x1="967.7" y1="145.4" x2="958.4" y2="376.7"><stop offset="0" stop-color="#ffffff"/><stop offset="0.06" stop-color="#c9c6ff"/><stop offset="0.12" stop-color="#a49fff"/><stop offset="0.2" stop-color="#8079ff"/><stop offset="0.3" stop-color="#6058ff"/><stop offset="0.42" stop-color="#463cff"/><stop offset="0.56" stop-color="#3226ff"/><stop offset="0.72" stop-color="#2114ff"/><stop offset="0.86" stop-color="#1609ff"/><stop offset="1" stop-color="#0d00ff"/></linearGradient><linearGradient id="g115" gradientUnits="userSpaceOnUse" x1="967.7" y1="145.4" x2="962.9" y2="371.6"><stop offset="0" stop-color="#ffffff"/><stop offset="0.06" stop-color="#cbc7ff"/><stop offset="0.12" stop-color="#a7a0ff"/><stop offset="0.2" stop-color="#847aff"/><stop offset="0.3" stop-color="#6559ff"/><stop offset="0.42" stop-color="#4c3dff"/><stop offset="0.56" stop-color="#3727ff"/><stop offset="0.72" stop-color="#2615ff"/><stop offset="0.86" stop-color="#1c09ff"/><stop offset="1" stop-color="#1300ff"/></linearGradient><linearGradient id="g116" gradientUnits="userSpaceOnUse" x1="967.7" y1="145.4" x2="967.4" y2="366.5"><stop offset="0" stop-color="#ffffff"/><stop offset="0.06" stop-color="#cec8ff"/><stop offset="0.12" stop-color="#aaa1ff"/><stop offset="0.2" stop-color="#887bff"/><stop offset="0.3" stop-color="#6a5aff"/><stop offset="0.42" stop-color="#513eff"/><stop offset="0.56" stop-color="#3d27ff"/><stop offset="0.72" stop-color="#2c15ff"/><stop offset="0.86" stop-color="#2109ff"/><stop offset="1" stop-color="#1900ff"/></linearGradient><linearGradient id="g117" gradientUnits="userSpaceOnUse" x1="967.7" y1="145.4" x2="972.0" y2="361.4"><stop offset="0" stop-color="#ffffff"/><stop offset="0.06" stop-color="#d0c9ff"/><stop offset="0.12" stop-color="#ada2ff"/><stop offset="0.2" stop-color="#8c7cff"/><stop offset="0.3" stop-color="#6f5bff"/><stop offset="0.42" stop-color="#563fff"/><stop offset="0.56" stop-color="#4228ff"/><stop offset="0.72" stop-color="#3216ff"/><stop offset="0.86" stop-color="#2809ff"/><stop offset="1" stop-color="#1f00ff"/></linearGradient><linearGradient id="g118" gradientUnits="userSpaceOnUse" x1="967.7" y1="145.4" x2="976.5" y2="356.2"><stop offset="0" stop-color="#ffffff"/><stop offset="0.06" stop-color="#d2caff"/><stop offset="0.12" stop-color="#b1a3ff"/><stop offset="0.2" stop-color="#917dff"/><stop offset="0.3" stop-color="#745cff"/><stop offset="0.42" stop-color="#5c40ff"/><stop offset="0.56" stop-color="#4829ff"/><stop offset="0.72" stop-color="#3816ff"/><stop offset="0.86" stop-color="#2e0aff"/><stop offset="1" stop-color="#2600ff"/></linearGradient><linearGradient id="g119" gradientUnits="userSpaceOnUse" x1="967.7" y1="145.4" x2="981.0" y2="351.1"><stop offset="0" stop-color="#ffffff"/><stop offset="0.06" stop-color="#d4cbff"/><stop offset="0.12" stop-color="#b4a4ff"/><stop offset="0.2" stop-color="#957fff"/><stop offset="0.3" stop-color="#795dff"/><stop offset="0.42" stop-color="#6241ff"/><stop offset="0.56" stop-color="#4f29ff"/><stop offset="0.72" stop-color="#3f16ff"/><stop offset="0.86" stop-color="#340aff"/><stop offset="1" stop-color="#2c00ff"/></linearGradient><linearGradient id="g120" gradientUnits="userSpaceOnUse" x1="967.7" y1="145.4" x2="985.6" y2="346.0"><stop offset="0" stop-color="#ffffff"/><stop offset="0.06" stop-color="#d6ccff"/><stop offset="0.12" stop-color="#b8a6ff"/><stop offset="0.2" stop-color="#9a80ff"/><stop offset="0.3" stop-color="#7f5fff"/><stop offset="0.42" stop-color="#6842ff"/><stop offset="0.56" stop-color="#552aff"/><stop offset="0.72" stop-color="#4517ff"/><stop offset="0.86" stop-color="#3b0aff"/><stop offset="1" stop-color="#3300ff"/></linearGradient><linearGradient id="g121" gradientUnits="userSpaceOnUse" x1="967.7" y1="145.4" x2="990.1" y2="340.9"><stop offset="0" stop-color="#ffffff"/><stop offset="0.06" stop-color="#d8ccff"/><stop offset="0.12" stop-color="#bba7ff"/><stop offset="0.2" stop-color="#9e81ff"/><stop offset="0.3" stop-color="#8460ff"/><stop offset="0.42" stop-color="#6e43ff"/><stop offset="0.56" stop-color="#5c2bff"/><stop offset="0.72" stop-color="#4c17ff"/><stop offset="0.86" stop-color="#420aff"/><stop offset="1" stop-color="#3b00ff"/></linearGradient><linearGradient id="g122" gradientUnits="userSpaceOnUse" x1="967.7" y1="145.4" x2="994.6" y2="335.7"><stop offset="0" stop-color="#ffffff"/><stop offset="0.06" stop-color="#dacdff"/><stop offset="0.12" stop-color="#bfa8ff"/><stop offset="0.2" stop-color="#a383ff"/><stop offset="0.3" stop-color="#8a61ff"/><stop offset="0.42" stop-color="#7544ff"/><stop offset="0.56" stop-color="#632cff"/><stop offset="0.72" stop-color="#5418ff"/><stop offset="0.86" stop-color="#4a0aff"/><stop offset="1" stop-color="#4200ff"/></linearGradient><linearGradient id="g123" gradientUnits="userSpaceOnUse" x1="967.7" y1="145.4" x2="999.2" y2="330.6"><stop offset="0" stop-color="#ffffff"/><stop offset="0.06" stop-color="#dcceff"/><stop offset="0.12" stop-color="#c2a9ff"/><stop offset="0.2" stop-color="#a884ff"/><stop offset="0.3" stop-color="#9062ff"/><stop offset="0.42" stop-color="#7b45ff"/><stop offset="0.56" stop-color="#6a2dff"/><stop offset="0.72" stop-color="#5b18ff"/><stop offset="0.86" stop-color="#520bff"/><stop offset="1" stop-color="#4a00ff"/></linearGradient><linearGradient id="g124" gradientUnits="userSpaceOnUse" x1="967.7" y1="145.4" x2="1003.7" y2="325.5"><stop offset="0" stop-color="#ffffff"/><stop offset="0.06" stop-color="#dfcfff"/><stop offset="0.12" stop-color="#c6abff"/><stop offset="0.2" stop-color="#ad86ff"/><stop offset="0.3" stop-color="#9664ff"/><stop offset="0.42" stop-color="#8246ff"/><stop offset="0.56" stop-color="#712dff"/><stop offset="0.72" stop-color="#6319ff"/><stop offset="0.86" stop-color="#5a0bff"/><stop offset="1" stop-color="#5200ff"/></linearGradient><linearGradient id="g125" gradientUnits="userSpaceOnUse" x1="967.7" y1="145.4" x2="1008.2" y2="320.3"><stop offset="0" stop-color="#ffffff"/><stop offset="0.06" stop-color="#e1d0ff"/><stop offset="0.12" stop-color="#caacff"/><stop offset="0.2" stop-color="#b287ff"/><stop offset="0.3" stop-color="#9c65ff"/><stop offset="0.42" stop-color="#8947ff"/><stop offset="0.56" stop-color="#792eff"/><stop offset="0.72" stop-color="#6b19ff"/><stop offset="0.86" stop-color="#620bff"/><stop offset="1" stop-color="#5b00ff"/></linearGradient><linearGradient id="g126" gradientUnits="userSpaceOnUse" x1="967.7" y1="145.4" x2="1012.8" y2="315.2"><stop offset="0" stop-color="#ffffff"/><stop offset="0.06" stop-color="#e3d1ff"/><stop offset="0.12" stop-color="#cdadff"/><stop offset="0.2" stop-color="#b789ff"/><stop offset="0.3" stop-color="#a267ff"/><stop offset="0.42" stop-color="#9049ff"/><stop offset="0.56" stop-color="#812fff"/><stop offset="0.72" stop-color="#741aff"/><stop offset="0.86" stop-color="#6b0bff"/><stop offset="1" stop-color="#6400ff"/></linearGradient><linearGradient id="g127" gradientUnits="userSpaceOnUse" x1="967.7" y1="145.4" x2="1017.3" y2="310.1"><stop offset="0" stop-color="#ffffff"/><stop offset="0.06" stop-color="#e5d2ff"/><stop offset="0.12" stop-color="#d1afff"/><stop offset="0.2" stop-color="#bc8aff"/><stop offset="0.3" stop-color="#a968ff"/><stop offset="0.42" stop-color="#984aff"/><stop offset="0.56" stop-color="#8930ff"/><stop offset="0.72" stop-color="#7d1aff"/><stop offset="0.86" stop-color="#740cff"/><stop offset="1" stop-color="#6e00ff"/></linearGradient><linearGradient id="g128" gradientUnits="userSpaceOnUse" x1="967.7" y1="145.4" x2="1021.8" y2="305.0"><stop offset="0" stop-color="#ffffff"/><stop offset="0.06" stop-color="#e7d3ff"/><stop offset="0.12" stop-color="#d5b0ff"/><stop offset="0.2" stop-color="#c28cff"/><stop offset="0.3" stop-color="#b06aff"/><stop offset="0.42" stop-color="#a04bff"/><stop offset="0.56" stop-color="#9231ff"/><stop offset="0.72" stop-color="#861bff"/><stop offset="0.86" stop-color="#7e0cff"/><stop offset="1" stop-color="#7800ff"/></linearGradient><linearGradient id="g129" gradientUnits="userSpaceOnUse" x1="967.7" y1="145.4" x2="1026.4" y2="299.8"><stop offset="0" stop-color="#ffffff"/><stop offset="0.06" stop-color="#ead4ff"/><stop offset="0.12" stop-color="#d9b1ff"/><stop offset="0.2" stop-color="#c78dff"/><stop offset="0.3" stop-color="#b76bff"/><stop offset="0.42" stop-color="#a84dff"/><stop offset="0.56" stop-color="#9b32ff"/><stop offset="0.72" stop-color="#901cff"/><stop offset="0.86" stop-color="#880cff"/><stop offset="1" stop-color="#8200ff"/></linearGradient><linearGradient id="g130" gradientUnits="userSpaceOnUse" x1="967.7" y1="145.4" x2="1030.9" y2="294.7"><stop offset="0" stop-color="#ffffff"/><stop offset="0.06" stop-color="#ecd5ff"/><stop offset="0.12" stop-color="#ddb3ff"/><stop offset="0.2" stop-color="#cd8fff"/><stop offset="0.3" stop-color="#be6dff"/><stop offset="0.42" stop-color="#b04eff"/><stop offset="0.56" stop-color="#a433ff"/><stop offset="0.72" stop-color="#9a1cff"/><stop offset="0.86" stop-color="#930dff"/><stop offset="1" stop-color="#8d00ff"/></linearGradient><linearGradient id="g131" gradientUnits="userSpaceOnUse" x1="967.7" y1="145.4" x2="1035.4" y2="289.6"><stop offset="0" stop-color="#ffffff"/><stop offset="0.06" stop-color="#eed6ff"/><stop offset="0.12" stop-color="#e1b4ff"/><stop offset="0.2" stop-color="#d391ff"/><stop offset="0.3" stop-color="#c56fff"/><stop offset="0.42" stop-color="#b950ff"/><stop offset="0.56" stop-color="#ae34ff"/><stop offset="0.72" stop-color="#a51dff"/><stop offset="0.86" stop-color="#9e0dff"/><stop offset="1" stop-color="#9900ff"/></linearGradient><linearGradient id="g132" gradientUnits="userSpaceOnUse" x1="967.7" y1="145.4" x2="1040.0" y2="284.5"><stop offset="0" stop-color="#ffffff"/><stop offset="0.06" stop-color="#f1d6ff"/><stop offset="0.12" stop-color="#e5b6ff"/><stop offset="0.2" stop-color="#d993ff"/><stop offset="0.3" stop-color="#cd70ff"/><stop offset="0.42" stop-color="#c251ff"/><stop offset="0.56" stop-color="#b835ff"/><stop offset="0.72" stop-color="#b01eff"/><stop offset="0.86" stop-color="#aa0dff"/><stop offset="1" stop-color="#a600ff"/></linearGradient><linearGradient id="g133" gradientUnits="userSpaceOnUse" x1="967.7" y1="145.4" x2="1044.5" y2="279.3"><stop offset="0" stop-color="#ffffff"/><stop offset="0.06" stop-color="#f3d7ff"/><stop offset="0.12" stop-color="#e9b7ff"/><stop offset="0.2" stop-color="#df94ff"/><stop offset="0.3" stop-color="#d572ff"/><stop offset="0.42" stop-color="#cb53ff"/><stop offset="0.56" stop-color="#c337ff"/><stop offset="0.72" stop-color="#bc1eff"/><stop offset="0.86" stop-color="#b70eff"/><stop offset="1" stop-color="#b300ff"/></linearGradient><linearGradient id="g134" gradientUnits="userSpaceOnUse" x1="967.7" y1="145.4" x2="1049.0" y2="274.2"><stop offset="0" stop-color="#ffffff"/><stop offset="0.06" stop-color="#f6d8ff"/><stop offset="0.12" stop-color="#eeb9ff"/><stop offset="0.2" stop-color="#e596ff"/><stop offset="0.3" stop-color="#dd74ff"/><stop offset="0.42" stop-color="#d554ff"/><stop offset="0.56" stop-color="#ce38ff"/><stop offset="0.72" stop-color="#c81fff"/><stop offset="0.86" stop-color="#c40eff"/><stop offset="1" stop-color="#c100ff"/></linearGradient><linearGradient id="g135" gradientUnits="userSpaceOnUse" x1="967.7" y1="145.4" x2="1053.6" y2="269.1"><stop offset="0" stop-color="#ffffff"/><stop offset="0.06" stop-color="#f8d9ff"/><stop offset="0.12" stop-color="#f2baff"/><stop offset="0.2" stop-color="#ec98ff"/><stop offset="0.3" stop-color="#e576ff"/><stop offset="0.42" stop-color="#df56ff"/><stop offset="0.56" stop-color="#da39ff"/><stop offset="0.72" stop-color="#d520ff"/><stop offset="0.86" stop-color="#d20eff"/><stop offset="1" stop-color="#cf00ff"/></linearGradient><linearGradient id="g136" gradientUnits="userSpaceOnUse" x1="967.7" y1="145.4" x2="1058.1" y2="264.0"><stop offset="0" stop-color="#ffffff"/><stop offset="0.06" stop-color="#fadaff"/><stop offset="0.12" stop-color="#f7bcff"/><stop offset="0.2" stop-color="#f29aff"/><stop offset="0.3" stop-color="#ee78ff"/><stop offset="0.42" stop-color="#ea58ff"/><stop offset="0.56" stop-color="#e63bff"/><stop offset="0.72" stop-color="#e321ff"/><stop offset="0.86" stop-color="#e10fff"/><stop offset="1" stop-color="#df00ff"/></linearGradient><linearGradient id="g137" gradientUnits="userSpaceOnUse" x1="967.7" y1="145.4" x2="1062.6" y2="258.8"><stop offset="0" stop-color="#ffffff"/><stop offset="0.06" stop-color="#fddbff"/><stop offset="0.12" stop-color="#fbbdff"/><stop offset="0.2" stop-color="#f99cff"/><stop offset="0.3" stop-color="#f77aff"/><stop offset="0.42" stop-color="#f55aff"/><stop offset="0.56" stop-color="#f33cff"/><stop offset="0.72" stop-color="#f222ff"/><stop offset="0.86" stop-color="#f10fff"/><stop offset="1" stop-color="#f000ff"/></linearGradient><linearGradient id="g138" gradientUnits="userSpaceOnUse" x1="967.7" y1="145.4" x2="1067.2" y2="253.7"><stop offset="0" stop-color="#ffffff"/><stop offset="0.06" stop-color="#ffdcff"/><stop offset="0.12" stop-color="#ffbefe"/><stop offset="0.2" stop-color="#ff9dfe"/><stop offset="0.3" stop-color="#ff7cfe"/><stop offset="0.42" stop-color="#ff5bfd"/><stop offset="0.56" stop-color="#ff3dfd"/><stop offset="0.72" stop-color="#ff23fd"/><stop offset="0.86" stop-color="#ff10fd"/><stop offset="1" stop-color="#ff00fd"/></linearGradient><linearGradient id="g139" gradientUnits="userSpaceOnUse" x1="967.7" y1="145.4" x2="1071.7" y2="248.6"><stop offset="0" stop-color="#ffffff"/><stop offset="0.06" stop-color="#ffdbfc"/><stop offset="0.12" stop-color="#ffbdfa"/><stop offset="0.2" stop-color="#ff9bf7"/><stop offset="0.3" stop-color="#ff79f5"/><stop offset="0.42" stop-color="#ff59f2"/><stop offset="0.56" stop-color="#ff3cf0"/><stop offset="0.72" stop-color="#ff21ee"/><stop offset="0.86" stop-color="#ff0fec"/><stop offset="1" stop-color="#ff00eb"/></linearGradient><linearGradient id="g140" gradientUnits="userSpaceOnUse" x1="967.7" y1="145.4" x2="1076.2" y2="243.4"><stop offset="0" stop-color="#ffffff"/><stop offset="0.06" stop-color="#ffdafa"/><stop offset="0.12" stop-color="#ffbbf5"/><stop offset="0.2" stop-color="#ff99f1"/><stop offset="0.3" stop-color="#ff77ec"/><stop offset="0.42" stop-color="#ff57e7"/><stop offset="0.56" stop-color="#ff3ae3"/><stop offset="0.72" stop-color="#ff20e0"/><stop offset="0.86" stop-color="#ff0fdd"/><stop offset="1" stop-color="#ff00db"/></linearGradient><linearGradient id="g141" gradientUnits="userSpaceOnUse" x1="967.7" y1="145.4" x2="1080.7" y2="238.3"><stop offset="0" stop-color="#ffffff"/><stop offset="0.06" stop-color="#ffd9f7"/><stop offset="0.12" stop-color="#ffb9f1"/><stop offset="0.2" stop-color="#ff97ea"/><stop offset="0.3" stop-color="#ff75e3"/><stop offset="0.42" stop-color="#ff55dd"/><stop offset="0.56" stop-color="#ff38d7"/><stop offset="0.72" stop-color="#ff1fd2"/><stop offset="0.86" stop-color="#ff0ecf"/><stop offset="1" stop-color="#ff00cc"/></linearGradient><linearGradient id="g142" gradientUnits="userSpaceOnUse" x1="967.7" y1="145.4" x2="1085.3" y2="233.2"><stop offset="0" stop-color="#ffffff"/><stop offset="0.06" stop-color="#ffd8f5"/><stop offset="0.12" stop-color="#ffb7ed"/><stop offset="0.2" stop-color="#ff95e4"/><stop offset="0.3" stop-color="#ff73db"/><stop offset="0.42" stop-color="#ff53d3"/><stop offset="0.56" stop-color="#ff37cc"/><stop offset="0.72" stop-color="#ff1fc6"/><stop offset="0.86" stop-color="#ff0ec1"/><stop offset="1" stop-color="#ff00be"/></linearGradient><linearGradient id="g143" gradientUnits="userSpaceOnUse" x1="967.7" y1="145.4" x2="1089.8" y2="228.1"><stop offset="0" stop-color="#ffffff"/><stop offset="0.06" stop-color="#ffd7f3"/><stop offset="0.12" stop-color="#ffb6e8"/><stop offset="0.2" stop-color="#ff93de"/><stop offset="0.3" stop-color="#ff71d3"/><stop offset="0.42" stop-color="#ff51c9"/><stop offset="0.56" stop-color="#ff36c1"/><stop offset="0.72" stop-color="#ff1eba"/><stop offset="0.86" stop-color="#ff0db5"/><stop offset="1" stop-color="#ff00b1"/></linearGradient><linearGradient id="g144" gradientUnits="userSpaceOnUse" x1="967.7" y1="145.4" x2="1094.3" y2="222.9"><stop offset="0" stop-color="#ffffff"/><stop offset="0.06" stop-color="#ffd5f0"/><stop offset="0.12" stop-color="#ffb4e4"/><stop offset="0.2" stop-color="#ff91d8"/><stop offset="0.3" stop-color="#ff6fcc"/><stop offset="0.42" stop-color="#ff50c0"/><stop offset="0.56" stop-color="#ff34b7"/><stop offset="0.72" stop-color="#ff1dae"/><stop offset="0.86" stop-color="#ff0da9"/><stop offset="1" stop-color="#ff00a4"/></linearGradient><linearGradient id="g145" gradientUnits="userSpaceOnUse" x1="967.7" y1="145.4" x2="1098.9" y2="217.8"><stop offset="0" stop-color="#ffffff"/><stop offset="0.06" stop-color="#ffd4ee"/><stop offset="0.12" stop-color="#ffb3e0"/><stop offset="0.2" stop-color="#ff8fd2"/><stop offset="0.3" stop-color="#ff6dc4"/><stop offset="0.42" stop-color="#ff4eb8"/><stop offset="0.56" stop-color="#ff33ad"/><stop offset="0.72" stop-color="#ff1ca4"/><stop offset="0.86" stop-color="#ff0d9d"/><stop offset="1" stop-color="#ff0098"/></linearGradient><linearGradient id="g146" gradientUnits="userSpaceOnUse" x1="967.7" y1="145.4" x2="1103.4" y2="212.7"><stop offset="0" stop-color="#ffffff"/><stop offset="0.06" stop-color="#ffd3ec"/><stop offset="0.12" stop-color="#ffb1dc"/><stop offset="0.2" stop-color="#ff8dcc"/><stop offset="0.3" stop-color="#ff6bbd"/><stop offset="0.42" stop-color="#ff4caf"/><stop offset="0.56" stop-color="#ff32a4"/><stop offset="0.72" stop-color="#ff1b9a"/><stop offset="0.86" stop-color="#ff0c93"/><stop offset="1" stop-color="#ff008d"/></linearGradient><linearGradient id="g147" gradientUnits="userSpaceOnUse" x1="967.7" y1="145.4" x2="1107.9" y2="207.6"><stop offset="0" stop-color="#ffffff"/><stop offset="0.06" stop-color="#ffd2e9"/><stop offset="0.12" stop-color="#ffafd8"/><stop offset="0.2" stop-color="#ff8bc7"/><stop offset="0.3" stop-color="#ff69b6"/><stop offset="0.42" stop-color="#ff4ba7"/><stop offset="0.56" stop-color="#ff319b"/><stop offset="0.72" stop-color="#ff1b90"/><stop offset="0.86" stop-color="#ff0c89"/><stop offset="1" stop-color="#ff0083"/></linearGradient><linearGradient id="g148" gradientUnits="userSpaceOnUse" x1="967.7" y1="145.4" x2="1112.5" y2="202.4"><stop offset="0" stop-color="#ffffff"/><stop offset="0.06" stop-color="#ffd1e7"/><stop offset="0.12" stop-color="#ffaed4"/><stop offset="0.2" stop-color="#ff89c1"/><stop offset="0.3" stop-color="#ff67af"/><stop offset="0.42" stop-color="#ff49a0"/><stop offset="0.56" stop-color="#ff3092"/><stop offset="0.72" stop-color="#ff1a87"/><stop offset="0.86" stop-color="#ff0c7f"/><stop offset="1" stop-color="#ff0079"/></linearGradient><linearGradient id="g149" gradientUnits="userSpaceOnUse" x1="967.7" y1="145.4" x2="1117.0" y2="197.3"><stop offset="0" stop-color="#ffffff"/><stop offset="0.06" stop-color="#ffd0e5"/><stop offset="0.12" stop-color="#ffacd1"/><stop offset="0.2" stop-color="#ff88bc"/><stop offset="0.3" stop-color="#ff66a9"/><stop offset="0.42" stop-color="#ff4898"/><stop offset="0.56" stop-color="#ff2f8a"/><stop offset="0.72" stop-color="#ff197e"/><stop offset="0.86" stop-color="#ff0b76"/><stop offset="1" stop-color="#ff0070"/></linearGradient><linearGradient id="g150" gradientUnits="userSpaceOnUse" x1="967.7" y1="145.4" x2="1121.5" y2="192.2"><stop offset="0" stop-color="#ffffff"/><stop offset="0.06" stop-color="#ffcfe3"/><stop offset="0.12" stop-color="#ffabcd"/><stop offset="0.2" stop-color="#ff86b7"/><stop offset="0.3" stop-color="#ff64a3"/><stop offset="0.42" stop-color="#ff4791"/><stop offset="0.56" stop-color="#ff2e82"/><stop offset="0.72" stop-color="#ff1976"/><stop offset="0.86" stop-color="#ff0b6e"/><stop offset="1" stop-color="#ff0067"/></linearGradient><linearGradient id="g151" gradientUnits="userSpaceOnUse" x1="967.7" y1="145.4" x2="1126.1" y2="187.0"><stop offset="0" stop-color="#ffffff"/><stop offset="0.06" stop-color="#ffcee0"/><stop offset="0.12" stop-color="#ffa9c9"/><stop offset="0.2" stop-color="#ff84b2"/><stop offset="0.3" stop-color="#ff639d"/><stop offset="0.42" stop-color="#ff458a"/><stop offset="0.56" stop-color="#ff2d7b"/><stop offset="0.72" stop-color="#ff186e"/><stop offset="0.86" stop-color="#ff0b66"/><stop offset="1" stop-color="#ff005f"/></linearGradient><linearGradient id="g152" gradientUnits="userSpaceOnUse" x1="967.7" y1="145.4" x2="1130.6" y2="181.9"><stop offset="0" stop-color="#ffffff"/><stop offset="0.06" stop-color="#ffcdde"/><stop offset="0.12" stop-color="#ffa8c6"/><stop offset="0.2" stop-color="#ff83ad"/><stop offset="0.3" stop-color="#ff6197"/><stop offset="0.42" stop-color="#ff4484"/><stop offset="0.56" stop-color="#ff2c74"/><stop offset="0.72" stop-color="#ff1866"/><stop offset="0.86" stop-color="#ff0a5e"/><stop offset="1" stop-color="#ff0057"/></linearGradient><linearGradient id="g153" gradientUnits="userSpaceOnUse" x1="967.7" y1="145.4" x2="1135.1" y2="176.8"><stop offset="0" stop-color="#ffffff"/><stop offset="0.06" stop-color="#ffccdc"/><stop offset="0.12" stop-color="#ffa7c2"/><stop offset="0.2" stop-color="#ff81a8"/><stop offset="0.3" stop-color="#ff6091"/><stop offset="0.42" stop-color="#ff437d"/><stop offset="0.56" stop-color="#ff2b6d"/><stop offset="0.72" stop-color="#ff175f"/><stop offset="0.86" stop-color="#ff0a56"/><stop offset="1" stop-color="#ff004f"/></linearGradient><linearGradient id="g154" gradientUnits="userSpaceOnUse" x1="967.7" y1="145.4" x2="1139.7" y2="171.7"><stop offset="0" stop-color="#ffffff"/><stop offset="0.06" stop-color="#ffcbda"/><stop offset="0.12" stop-color="#ffa5bf"/><stop offset="0.2" stop-color="#ff80a4"/><stop offset="0.3" stop-color="#ff5e8c"/><stop offset="0.42" stop-color="#ff4277"/><stop offset="0.56" stop-color="#ff2a66"/><stop offset="0.72" stop-color="#ff1758"/><stop offset="0.86" stop-color="#ff0a4f"/><stop offset="1" stop-color="#ff0048"/></linearGradient><linearGradient id="g155" gradientUnits="userSpaceOnUse" x1="967.7" y1="145.4" x2="1144.2" y2="166.5"><stop offset="0" stop-color="#ffffff"/><stop offset="0.06" stop-color="#ffcad8"/><stop offset="0.12" stop-color="#ffa4bb"/><stop offset="0.2" stop-color="#ff7e9f"/><stop offset="0.3" stop-color="#ff5d86"/><stop offset="0.42" stop-color="#ff4171"/><stop offset="0.56" stop-color="#ff2960"/><stop offset="0.72" stop-color="#ff1652"/><stop offset="0.86" stop-color="#ff0a48"/><stop offset="1" stop-color="#ff0041"/></linearGradient><linearGradient id="g156" gradientUnits="userSpaceOnUse" x1="967.7" y1="145.4" x2="1148.7" y2="161.4"><stop offset="0" stop-color="#ffffff"/><stop offset="0.06" stop-color="#ffc9d6"/><stop offset="0.12" stop-color="#ffa3b8"/><stop offset="0.2" stop-color="#ff7d9b"/><stop offset="0.3" stop-color="#ff5b81"/><stop offset="0.42" stop-color="#ff3f6b"/><stop offset="0.56" stop-color="#ff285a"/><stop offset="0.72" stop-color="#ff164b"/><stop offset="0.86" stop-color="#ff0a42"/><stop offset="1" stop-color="#ff003b"/></linearGradient><linearGradient id="g157" gradientUnits="userSpaceOnUse" x1="967.7" y1="145.4" x2="1153.3" y2="156.3"><stop offset="0" stop-color="#ffffff"/><stop offset="0.06" stop-color="#ffc8d4"/><stop offset="0.12" stop-color="#ffa1b4"/><stop offset="0.2" stop-color="#ff7b96"/><stop offset="0.3" stop-color="#ff5a7c"/><stop offset="0.42" stop-color="#ff3e66"/><stop offset="0.56" stop-color="#ff2854"/><stop offset="0.72" stop-color="#ff1545"/><stop offset="0.86" stop-color="#ff093c"/><stop offset="1" stop-color="#ff0034"/></linearGradient><linearGradient id="g158" gradientUnits="userSpaceOnUse" x1="967.7" y1="145.4" x2="1157.8" y2="151.2"><stop offset="0" stop-color="#ffffff"/><stop offset="0.06" stop-color="#ffc7d2"/><stop offset="0.12" stop-color="#ffa0b1"/><stop offset="0.2" stop-color="#ff7a92"/><stop offset="0.3" stop-color="#ff5977"/><stop offset="0.42" stop-color="#ff3d61"/><stop offset="0.56" stop-color="#ff274e"/><stop offset="0.72" stop-color="#ff153f"/><stop offset="0.86" stop-color="#ff0936"/><stop offset="1" stop-color="#ff002e"/></linearGradient><linearGradient id="g159" gradientUnits="userSpaceOnUse" x1="967.7" y1="145.4" x2="1162.3" y2="146.0"><stop offset="0" stop-color="#ffffff"/><stop offset="0.06" stop-color="#ffc7d0"/><stop offset="0.12" stop-color="#ff9fae"/><stop offset="0.2" stop-color="#ff798e"/><stop offset="0.3" stop-color="#ff5872"/><stop offset="0.42" stop-color="#ff3c5b"/><stop offset="0.56" stop-color="#ff2649"/><stop offset="0.72" stop-color="#ff143a"/><stop offset="0.86" stop-color="#ff0930"/><stop offset="1" stop-color="#ff0029"/></linearGradient><linearGradient id="g160" gradientUnits="userSpaceOnUse" x1="967.7" y1="145.4" x2="1166.9" y2="140.9"><stop offset="0" stop-color="#ffffff"/><stop offset="0.06" stop-color="#ffc6ce"/><stop offset="0.12" stop-color="#ff9dab"/><stop offset="0.2" stop-color="#ff778a"/><stop offset="0.3" stop-color="#ff566e"/><stop offset="0.42" stop-color="#ff3b56"/><stop offset="0.56" stop-color="#ff2643"/><stop offset="0.72" stop-color="#ff1434"/><stop offset="0.86" stop-color="#ff092b"/><stop offset="1" stop-color="#ff0023"/></linearGradient><linearGradient id="g161" gradientUnits="userSpaceOnUse" x1="967.7" y1="145.4" x2="1171.4" y2="135.8"><stop offset="0" stop-color="#ffffff"/><stop offset="0.06" stop-color="#ffc5cc"/><stop offset="0.12" stop-color="#ff9ca8"/><stop offset="0.2" stop-color="#ff7686"/><stop offset="0.3" stop-color="#ff5569"/><stop offset="0.42" stop-color="#ff3a51"/><stop offset="0.56" stop-color="#ff253e"/><stop offset="0.72" stop-color="#ff142f"/><stop offset="0.86" stop-color="#ff0925"/><stop offset="1" stop-color="#ff001e"/></linearGradient><linearGradient id="g162" gradientUnits="userSpaceOnUse" x1="967.7" y1="145.4" x2="1175.9" y2="130.7"><stop offset="0" stop-color="#ffffff"/><stop offset="0.06" stop-color="#ffc4ca"/><stop offset="0.12" stop-color="#ff9ba5"/><stop offset="0.2" stop-color="#ff7582"/><stop offset="0.3" stop-color="#ff5465"/><stop offset="0.42" stop-color="#ff3a4d"/><stop offset="0.56" stop-color="#ff2439"/><stop offset="0.72" stop-color="#ff132a"/><stop offset="0.86" stop-color="#ff0820"/><stop offset="1" stop-color="#ff0019"/></linearGradient><linearGradient id="g163" gradientUnits="userSpaceOnUse" x1="967.7" y1="145.4" x2="1180.5" y2="125.5"><stop offset="0" stop-color="#ffffff"/><stop offset="0.06" stop-color="#ffc3c8"/><stop offset="0.12" stop-color="#ff9aa2"/><stop offset="0.2" stop-color="#ff747e"/><stop offset="0.3" stop-color="#ff5360"/><stop offset="0.42" stop-color="#ff3948"/><stop offset="0.56" stop-color="#ff2435"/><stop offset="0.72" stop-color="#ff1325"/><stop offset="0.86" stop-color="#ff081b"/><stop offset="1" stop-color="#ff0014"/></linearGradient><linearGradient id="g164" gradientUnits="userSpaceOnUse" x1="967.7" y1="145.4" x2="1185.0" y2="120.4"><stop offset="0" stop-color="#ffffff"/><stop offset="0.06" stop-color="#ffc2c6"/><stop offset="0.12" stop-color="#ff999f"/><stop offset="0.2" stop-color="#ff727b"/><stop offset="0.3" stop-color="#ff525c"/><stop offset="0.42" stop-color="#ff3844"/><stop offset="0.56" stop-color="#ff2330"/><stop offset="0.72" stop-color="#ff1321"/><stop offset="0.86" stop-color="#ff0817"/><stop offset="1" stop-color="#ff000f"/></linearGradient><linearGradient id="g165" gradientUnits="userSpaceOnUse" x1="967.7" y1="145.4" x2="1189.5" y2="115.3"><stop offset="0" stop-color="#ffffff"/><stop offset="0.06" stop-color="#ffc1c4"/><stop offset="0.12" stop-color="#ff979c"/><stop offset="0.2" stop-color="#ff7177"/><stop offset="0.3" stop-color="#ff5158"/><stop offset="0.42" stop-color="#ff373f"/><stop offset="0.56" stop-color="#ff232c"/><stop offset="0.72" stop-color="#ff121c"/><stop offset="0.86" stop-color="#ff0812"/><stop offset="1" stop-color="#ff000b"/></linearGradient><linearGradient id="g166" gradientUnits="userSpaceOnUse" x1="967.7" y1="145.4" x2="1194.1" y2="110.1"><stop offset="0" stop-color="#ffffff"/><stop offset="0.06" stop-color="#ffc0c2"/><stop offset="0.12" stop-color="#ff9699"/><stop offset="0.2" stop-color="#ff7073"/><stop offset="0.3" stop-color="#ff5054"/><stop offset="0.42" stop-color="#ff363b"/><stop offset="0.56" stop-color="#ff2227"/><stop offset="0.72" stop-color="#ff1218"/><stop offset="0.86" stop-color="#ff080e"/><stop offset="1" stop-color="#ff0006"/></linearGradient><linearGradient id="g167" gradientUnits="userSpaceOnUse" x1="967.7" y1="145.4" x2="1198.6" y2="105.0"><stop offset="0" stop-color="#ffffff"/><stop offset="0.06" stop-color="#ffbfc0"/><stop offset="0.12" stop-color="#ff9596"/><stop offset="0.2" stop-color="#ff6f70"/><stop offset="0.3" stop-color="#ff4f50"/><stop offset="0.42" stop-color="#ff3537"/><stop offset="0.56" stop-color="#ff2123"/><stop offset="0.72" stop-color="#ff1214"/><stop offset="0.86" stop-color="#ff080a"/><stop offset="1" stop-color="#ff0002"/></linearGradient></defs><g><polygon points="967.7,145.4 1200.8,102.5 1195.5,101.9 1190.1,101.3" fill="url(#g0)"/><polygon points="967.7,145.4 1195.5,101.9 1190.1,101.3 1184.8,100.8" fill="url(#g1)"/><polygon points="967.7,145.4 1190.1,101.3 1184.8,100.8 1179.4,100.2" fill="url(#g2)"/><polygon points="967.7,145.4 1184.8,100.8 1179.4,100.2 1174.0,99.7" fill="url(#g3)"/><polygon points="967.7,145.4 1179.4,100.2 1174.0,99.7 1168.7,99.1" fill="url(#g4)"/><polygon points="967.7,145.4 1174.0,99.7 1168.7,99.1 1163.3,98.6" fill="url(#g5)"/><polygon points="967.7,145.4 1168.7,99.1 1163.3,98.6 1157.9,98.0" fill="url(#g6)"/><polygon points="967.7,145.4 1163.3,98.6 1157.9,98.0 1152.6,97.4" fill="url(#g7)"/><polygon points="967.7,145.4 1157.9,98.0 1152.6,97.4 1147.2,96.9" fill="url(#g8)"/><polygon points="967.7,145.4 1152.6,97.4 1147.2,96.9 1141.9,96.3" fill="url(#g9)"/><polygon points="967.7,145.4 1147.2,96.9 1141.9,96.3 1136.5,95.8" fill="url(#g10)"/><polygon points="967.7,145.4 1141.9,96.3 1136.5,95.8 1131.1,95.2" fill="url(#g11)"/><polygon points="967.7,145.4 1136.5,95.8 1131.1,95.2 1125.8,94.7" fill="url(#g12)"/><polygon points="967.7,145.4 1131.1,95.2 1125.8,94.7 1120.4,94.1" fill="url(#g13)"/><polygon points="967.7,145.4 1125.8,94.7 1120.4,94.1 1115.0,93.6" fill="url(#g14)"/><polygon points="967.7,145.4 1120.4,94.1 1115.0,93.6 1109.7,93.0" fill="url(#g15)"/><polygon points="967.7,145.4 1115.0,93.6 1109.7,93.0 1104.3,92.4" fill="url(#g16)"/><polygon points="967.7,145.4 1109.7,93.0 1104.3,92.4 1099.0,91.9" fill="url(#g17)"/><polygon points="967.7,145.4 1104.3,92.4 1099.0,91.9 1093.6,91.3" fill="url(#g18)"/><polygon points="967.7,145.4 1099.0,91.9 1093.6,91.3 1088.2,90.8" fill="url(#g19)"/><polygon points="967.7,145.4 1093.6,91.3 1088.2,90.8 1082.9,90.2" fill="url(#g20)"/><polygon points="967.7,145.4 1088.2,90.8 1082.9,90.2 1077.5,89.7" fill="url(#g21)"/><polygon points="967.7,145.4 1082.9,90.2 1077.5,89.7 1072.1,89.1" fill="url(#g22)"/><polygon points="967.7,145.4 1077.5,89.7 1072.1,89.1 1066.8,88.5" fill="url(#g23)"/><polygon points="967.7,145.4 1072.1,89.1 1066.8,88.5 1061.4,88.0" fill="url(#g24)"/><polygon points="967.7,145.4 1066.8,88.5 1061.4,88.0 1056.1,87.4" fill="url(#g25)"/><polygon points="967.7,145.4 1061.4,88.0 1056.1,87.4 1050.7,86.9" fill="url(#g26)"/><polygon points="967.7,145.4 1056.1,87.4 1050.7,86.9 1045.3,86.3" fill="url(#g27)"/><polygon points="967.7,145.4 1050.7,86.9 1045.3,86.3 1040.0,85.8" fill="url(#g28)"/><polygon points="967.7,145.4 1045.3,86.3 1040.0,85.8 1034.6,85.2" fill="url(#g29)"/><polygon points="967.7,145.4 1040.0,85.8 1034.6,85.2 1029.2,84.7" fill="url(#g30)"/><polygon points="967.7,145.4 1034.6,85.2 1029.2,84.7 1023.9,84.1" fill="url(#g31)"/><polygon points="967.7,145.4 1029.2,84.7 1023.9,84.1 1018.5,83.5" fill="url(#g32)"/><polygon points="967.7,145.4 1023.9,84.1 1018.5,83.5 1013.2,83.0" fill="url(#g33)"/><polygon points="967.7,145.4 1018.5,83.5 1013.2,83.0 1007.8,82.4" fill="url(#g34)"/><polygon points="967.7,145.4 1013.2,83.0 1007.8,82.4 1002.4,81.9" fill="url(#g35)"/><polygon points="967.7,145.4 1007.8,82.4 1002.4,81.9 997.1,81.3" fill="url(#g36)"/><polygon points="967.7,145.4 1002.4,81.9 997.1,81.3 991.7,80.8" fill="url(#g37)"/><polygon points="967.7,145.4 997.1,81.3 991.7,80.8 986.3,80.2" fill="url(#g38)"/><polygon points="967.7,145.4 991.7,80.8 986.3,80.2 981.0,79.6" fill="url(#g39)"/><polygon points="967.7,145.4 986.3,80.2 981.0,79.6 975.6,79.1" fill="url(#g40)"/><polygon points="967.7,145.4 981.0,79.6 975.6,79.1 970.3,78.5" fill="url(#g41)"/><polygon points="967.7,145.4 975.6,79.1 970.3,78.5 964.9,78.0" fill="url(#g42)"/><polygon points="967.7,145.4 970.3,78.5 964.9,78.0 959.5,77.4" fill="url(#g43)"/><polygon points="967.7,145.4 964.9,78.0 959.5,77.4 954.2,76.9" fill="url(#g44)"/><polygon points="967.7,145.4 959.5,77.4 954.2,76.9 948.8,76.3" fill="url(#g45)"/><polygon points="967.7,145.4 954.2,76.9 948.8,76.3 943.4,75.7" fill="url(#g46)"/><polygon points="967.7,145.4 948.8,76.3 943.4,75.7 938.1,75.2" fill="url(#g47)"/><polygon points="967.7,145.4 943.4,75.7 938.1,75.2 932.7,74.6" fill="url(#g48)"/><polygon points="967.7,145.4 938.1,75.2 932.7,74.6 927.4,74.1" fill="url(#g49)"/><polygon points="967.7,145.4 932.7,74.6 927.4,74.1 922.0,73.5" fill="url(#g50)"/><polygon points="967.7,145.4 927.4,74.1 922.0,73.5 916.6,73.0" fill="url(#g51)"/><polygon points="967.7,145.4 922.0,73.5 916.6,73.0 911.3,72.4" fill="url(#g52)"/><polygon points="967.7,145.4 916.6,73.0 911.3,72.4 905.9,71.9" fill="url(#g53)"/><polygon points="967.7,145.4 911.3,72.4 905.9,71.9 900.6,71.3" fill="url(#g54)"/><polygon points="967.7,145.4 905.9,71.9 900.6,71.3 901.4,77.0" fill="url(#g55)"/><polygon points="967.7,145.4 900.6,71.3 901.4,77.0 902.2,82.7" fill="url(#g56)"/><polygon points="967.7,145.4 901.4,77.0 902.2,82.7 903.0,88.3" fill="url(#g57)"/><polygon points="967.7,145.4 902.2,82.7 903.0,88.3 903.9,94.0" fill="url(#g58)"/><polygon points="967.7,145.4 903.0,88.3 903.9,94.0 904.7,99.7" fill="url(#g59)"/><polygon points="967.7,145.4 903.9,94.0 904.7,99.7 905.5,105.4" fill="url(#g60)"/><polygon points="967.7,145.4 904.7,99.7 905.5,105.4 906.4,111.1" fill="url(#g61)"/><polygon points="967.7,145.4 905.5,105.4 906.4,111.1 907.2,116.8" fill="url(#g62)"/><polygon points="967.7,145.4 906.4,111.1 907.2,116.8 908.0,122.4" fill="url(#g63)"/><polygon points="967.7,145.4 907.2,116.8 908.0,122.4 908.9,128.1" fill="url(#g64)"/><polygon points="967.7,145.4 908.0,122.4 908.9,128.1 909.7,133.8" fill="url(#g65)"/><polygon points="967.7,145.4 908.9,128.1 909.7,133.8 910.5,139.5" fill="url(#g66)"/><polygon points="967.7,145.4 909.7,133.8 910.5,139.5 911.3,145.2" fill="url(#g67)"/><polygon points="967.7,145.4 910.5,139.5 911.3,145.2 912.2,150.9" fill="url(#g68)"/><polygon points="967.7,145.4 911.3,145.2 912.2,150.9 913.0,156.5" fill="url(#g69)"/><polygon points="967.7,145.4 912.2,150.9 913.0,156.5 913.8,162.2" fill="url(#g70)"/><polygon points="967.7,145.4 913.0,156.5 913.8,162.2 914.7,167.9" fill="url(#g71)"/><polygon points="967.7,145.4 913.8,162.2 914.7,167.9 915.5,173.6" fill="url(#g72)"/><polygon points="967.7,145.4 914.7,167.9 915.5,173.6 916.3,179.3" fill="url(#g73)"/><polygon points="967.7,145.4 915.5,173.6 916.3,179.3 917.2,185.0" fill="url(#g74)"/><polygon points="967.7,145.4 916.3,179.3 917.2,185.0 918.0,190.6" fill="url(#g75)"/><polygon points="967.7,145.4 917.2,185.0 918.0,190.6 918.8,196.3" fill="url(#g76)"/><polygon points="967.7,145.4 918.0,190.6 918.8,196.3 919.7,202.0" fill="url(#g77)"/><polygon points="967.7,145.4 918.8,196.3 919.7,202.0 920.5,207.7" fill="url(#g78)"/><polygon points="967.7,145.4 919.7,202.0 920.5,207.7 921.3,213.4" fill="url(#g79)"/><polygon points="967.7,145.4 920.5,207.7 921.3,213.4 922.1,219.1" fill="url(#g80)"/><polygon points="967.7,145.4 921.3,213.4 922.1,219.1 923.0,224.7" fill="url(#g81)"/><polygon points="967.7,145.4 922.1,219.1 923.0,224.7 923.8,230.4" fill="url(#g82)"/><polygon points="967.7,145.4 923.0,224.7 923.8,230.4 924.6,236.1" fill="url(#g83)"/><polygon points="967.7,145.4 923.8,230.4 924.6,236.1 925.5,241.8" fill="url(#g84)"/><polygon points="967.7,145.4 924.6,236.1 925.5,241.8 926.3,247.5" fill="url(#g85)"/><polygon points="967.7,145.4 925.5,241.8 926.3,247.5 927.1,253.2" fill="url(#g86)"/><polygon points="967.7,145.4 926.3,247.5 927.1,253.2 928.0,258.8" fill="url(#g87)"/><polygon points="967.7,145.4 927.1,253.2 928.0,258.8 928.8,264.5" fill="url(#g88)"/><polygon points="967.7,145.4 928.0,258.8 928.8,264.5 929.6,270.2" fill="url(#g89)"/><polygon points="967.7,145.4 928.8,264.5 929.6,270.2 930.4,275.9" fill="url(#g90)"/><polygon points="967.7,145.4 929.6,270.2 930.4,275.9 931.3,281.6" fill="url(#g91)"/><polygon points="967.7,145.4 930.4,275.9 931.3,281.6 932.1,287.3" fill="url(#g92)"/><polygon points="967.7,145.4 931.3,281.6 932.1,287.3 932.9,292.9" fill="url(#g93)"/><polygon points="967.7,145.4 932.1,287.3 932.9,292.9 933.8,298.6" fill="url(#g94)"/><polygon points="967.7,145.4 932.9,292.9 933.8,298.6 934.6,304.3" fill="url(#g95)"/><polygon points="967.7,145.4 933.8,298.6 934.6,304.3 935.4,310.0" fill="url(#g96)"/><polygon points="967.7,145.4 934.6,304.3 935.4,310.0 936.3,315.7" fill="url(#g97)"/><polygon points="967.7,145.4 935.4,310.0 936.3,315.7 937.1,321.4" fill="url(#g98)"/><polygon points="967.7,145.4 936.3,315.7 937.1,321.4 937.9,327.0" fill="url(#g99)"/><polygon points="967.7,145.4 937.1,321.4 937.9,327.0 938.8,332.7" fill="url(#g100)"/><polygon points="967.7,145.4 937.9,327.0 938.8,332.7 939.6,338.4" fill="url(#g101)"/><polygon points="967.7,145.4 938.8,332.7 939.6,338.4 940.4,344.1" fill="url(#g102)"/><polygon points="967.7,145.4 939.6,338.4 940.4,344.1 941.2,349.8" fill="url(#g103)"/><polygon points="967.7,145.4 940.4,344.1 941.2,349.8 942.1,355.5" fill="url(#g104)"/><polygon points="967.7,145.4 941.2,349.8 942.1,355.5 942.9,361.1" fill="url(#g105)"/><polygon points="967.7,145.4 942.1,355.5 942.9,361.1 943.7,366.8" fill="url(#g106)"/><polygon points="967.7,145.4 942.9,361.1 943.7,366.8 944.6,372.5" fill="url(#g107)"/><polygon points="967.7,145.4 943.7,366.8 944.6,372.5 945.4,378.2" fill="url(#g108)"/><polygon points="967.7,145.4 944.6,372.5 945.4,378.2 946.2,383.9" fill="url(#g109)"/><polygon points="967.7,145.4 945.4,378.2 946.2,383.9 947.1,389.6" fill="url(#g110)"/><polygon points="967.7,145.4 946.2,383.9 947.1,389.6 951.6,384.4" fill="url(#g111)"/><polygon points="967.7,145.4 947.1,389.6 951.6,384.4 956.1,379.3" fill="url(#g112)"/><polygon points="967.7,145.4 951.6,384.4 956.1,379.3 960.7,374.2" fill="url(#g113)"/><polygon points="967.7,145.4 956.1,379.3 960.7,374.2 965.2,369.1" fill="url(#g114)"/><polygon points="967.7,145.4 960.7,374.2 965.2,369.1 969.7,363.9" fill="url(#g115)"/><polygon points="967.7,145.4 965.2,369.1 969.7,363.9 974.2,358.8" fill="url(#g116)"/><polygon points="967.7,145.4 969.7,363.9 974.2,358.8 978.8,353.7" fill="url(#g117)"/><polygon points="967.7,145.4 974.2,358.8 978.8,353.7 983.3,348.5" fill="url(#g118)"/><polygon points="967.7,145.4 978.8,353.7 983.3,348.5 987.8,343.4" fill="url(#g119)"/><polygon points="967.7,145.4 983.3,348.5 987.8,343.4 992.4,338.3" fill="url(#g120)"/><polygon points="967.7,145.4 987.8,343.4 992.4,338.3 996.9,333.2" fill="url(#g121)"/><polygon points="967.7,145.4 992.4,338.3 996.9,333.2 1001.4,328.0" fill="url(#g122)"/><polygon points="967.7,145.4 996.9,333.2 1001.4,328.0 1006.0,322.9" fill="url(#g123)"/><polygon points="967.7,145.4 1001.4,328.0 1006.0,322.9 1010.5,317.8" fill="url(#g124)"/><polygon points="967.7,145.4 1006.0,322.9 1010.5,317.8 1015.0,312.7" fill="url(#g125)"/><polygon points="967.7,145.4 1010.5,317.8 1015.0,312.7 1019.6,307.5" fill="url(#g126)"/><polygon points="967.7,145.4 1015.0,312.7 1019.6,307.5 1024.1,302.4" fill="url(#g127)"/><polygon points="967.7,145.4 1019.6,307.5 1024.1,302.4 1028.6,297.3" fill="url(#g128)"/><polygon points="967.7,145.4 1024.1,302.4 1028.6,297.3 1033.2,292.1" fill="url(#g129)"/><polygon points="967.7,145.4 1028.6,297.3 1033.2,292.1 1037.7,287.0" fill="url(#g130)"/><polygon points="967.7,145.4 1033.2,292.1 1037.7,287.0 1042.2,281.9" fill="url(#g131)"/><polygon points="967.7,145.4 1037.7,287.0 1042.2,281.9 1046.8,276.8" fill="url(#g132)"/><polygon points="967.7,145.4 1042.2,281.9 1046.8,276.8 1051.3,271.6" fill="url(#g133)"/><polygon points="967.7,145.4 1046.8,276.8 1051.3,271.6 1055.8,266.5" fill="url(#g134)"/><polygon points="967.7,145.4 1051.3,271.6 1055.8,266.5 1060.4,261.4" fill="url(#g135)"/><polygon points="967.7,145.4 1055.8,266.5 1060.4,261.4 1064.9,256.3" fill="url(#g136)"/><polygon points="967.7,145.4 1060.4,261.4 1064.9,256.3 1069.4,251.1" fill="url(#g137)"/><polygon points="967.7,145.4 1064.9,256.3 1069.4,251.1 1074.0,246.0" fill="url(#g138)"/><polygon points="967.7,145.4 1069.4,251.1 1074.0,246.0 1078.5,240.9" fill="url(#g139)"/><polygon points="967.7,145.4 1074.0,246.0 1078.5,240.9 1083.0,235.8" fill="url(#g140)"/><polygon points="967.7,145.4 1078.5,240.9 1083.0,235.8 1087.5,230.6" fill="url(#g141)"/><polygon points="967.7,145.4 1083.0,235.8 1087.5,230.6 1092.1,225.5" fill="url(#g142)"/><polygon points="967.7,145.4 1087.5,230.6 1092.1,225.5 1096.6,220.4" fill="url(#g143)"/><polygon points="967.7,145.4 1092.1,225.5 1096.6,220.4 1101.1,215.2" fill="url(#g144)"/><polygon points="967.7,145.4 1096.6,220.4 1101.1,215.2 1105.7,210.1" fill="url(#g145)"/><polygon points="967.7,145.4 1101.1,215.2 1105.7,210.1 1110.2,205.0" fill="url(#g146)"/><polygon points="967.7,145.4 1105.7,210.1 1110.2,205.0 1114.7,199.9" fill="url(#g147)"/><polygon points="967.7,145.4 1110.2,205.0 1114.7,199.9 1119.3,194.7" fill="url(#g148)"/><polygon points="967.7,145.4 1114.7,199.9 1119.3,194.7 1123.8,189.6" fill="url(#g149)"/><polygon points="967.7,145.4 1119.3,194.7 1123.8,189.6 1128.3,184.5" fill="url(#g150)"/><polygon points="967.7,145.4 1123.8,189.6 1128.3,184.5 1132.9,179.4" fill="url(#g151)"/><polygon points="967.7,145.4 1128.3,184.5 1132.9,179.4 1137.4,174.2" fill="url(#g152)"/><polygon points="967.7,145.4 1132.9,179.4 1137.4,174.2 1141.9,169.1" fill="url(#g153)"/><polygon points="967.7,145.4 1137.4,174.2 1141.9,169.1 1146.5,164.0" fill="url(#g154)"/><polygon points="967.7,145.4 1141.9,169.1 1146.5,164.0 1151.0,158.9" fill="url(#g155)"/><polygon points="967.7,145.4 1146.5,164.0 1151.0,158.9 1155.5,153.7" fill="url(#g156)"/><polygon points="967.7,145.4 1151.0,158.9 1155.5,153.7 1160.1,148.6" fill="url(#g157)"/><polygon points="967.7,145.4 1155.5,153.7 1160.1,148.6 1164.6,143.5" fill="url(#g158)"/><polygon points="967.7,145.4 1160.1,148.6 1164.6,143.5 1169.1,138.3" fill="url(#g159)"/><polygon points="967.7,145.4 1164.6,143.5 1169.1,138.3 1173.7,133.2" fill="url(#g160)"/><polygon points="967.7,145.4 1169.1,138.3 1173.7,133.2 1178.2,128.1" fill="url(#g161)"/><polygon points="967.7,145.4 1173.7,133.2 1178.2,128.1 1182.7,123.0" fill="url(#g162)"/><polygon points="967.7,145.4 1178.2,128.1 1182.7,123.0 1187.3,117.8" fill="url(#g163)"/><polygon points="967.7,145.4 1182.7,123.0 1187.3,117.8 1191.8,112.7" fill="url(#g164)"/><polygon points="967.7,145.4 1187.3,117.8 1191.8,112.7 1196.3,107.6" fill="url(#g165)"/><polygon points="967.7,145.4 1191.8,112.7 1196.3,107.6 1200.8,102.5" fill="url(#g166)"/><polygon points="967.7,145.4 1196.3,107.6 1200.8,102.5 1195.5,101.9" fill="url(#g167)"/><polygon points="967.7,145.4 1200.8,102.5 1195.5,101.9 1190.1,101.3" fill="url(#g0)"/></g><g fill="none" stroke="#fff" stroke-width="1.25"><rect x="894.8" y="65.8" width="10.5" height="10.5"/><rect x="907.5" y="70.8" width="10.5" height="10.5"/><rect x="910.5" y="72.8" width="10.5" height="10.5"/><rect x="914.9" y="76.5" width="10.5" height="10.5"/><rect x="898.8" y="97.8" width="10.5" height="10.5"/><rect x="920.6" y="94.7" width="10.5" height="10.5"/><rect x="910.5" y="108.8" width="10.5" height="10.5"/><rect x="920.6" y="107.7" width="10.5" height="10.5"/><rect x="926.0" y="119.3" width="10.5" height="10.5"/><rect x="903.1" y="128.1" width="10.5" height="10.5"/><rect x="941.4" y="81.8" width="10.5" height="10.5"/><rect x="951.8" y="81.8" width="10.5" height="10.5"/><rect x="953.6" y="71.2" width="10.5" height="10.5"/><rect x="958.5" y="71.2" width="10.5" height="10.5"/><rect x="968.0" y="73.5" width="10.5" height="10.5"/><rect x="974.0" y="75.5" width="10.5" height="10.5"/><rect x="982.0" y="73.8" width="10.5" height="10.5"/><rect x="969.6" y="100.8" width="10.5" height="10.5"/><rect x="955.5" y="115.7" width="10.5" height="10.5"/><rect x="948.8" y="121.8" width="10.5" height="10.5"/><rect x="982.6" y="108.8" width="10.5" height="10.5"/><rect x="995.5" y="111.3" width="10.5" height="10.5"/><rect x="1001.8" y="78.0" width="10.5" height="10.5"/><rect x="1009.8" y="77.5" width="10.5" height="10.5"/><rect x="1026.3" y="85.5" width="10.5" height="10.5"/><rect x="1011.5" y="102.0" width="10.5" height="10.5"/><rect x="993.0" y="122.5" width="10.5" height="10.5"/><rect x="1035.0" y="79.8" width="10.5" height="10.5"/><rect x="1036.2" y="80.8" width="10.5" height="10.5"/><rect x="1056.0" y="90.3" width="10.5" height="10.5"/><rect x="1049.8" y="97.8" width="10.5" height="10.5"/><rect x="1034.5" y="97.2" width="10.5" height="10.5"/><rect x="1078.8" y="85.2" width="10.5" height="10.5"/><rect x="1107.8" y="87.7" width="10.5" height="10.5"/><rect x="1158.3" y="99.7" width="10.5" height="10.5"/><rect x="1052.3" y="115.2" width="10.5" height="10.5"/><rect x="1114.0" y="115.2" width="10.5" height="10.5"/><rect x="1038.8" y="100.2" width="10.5" height="10.5"/><rect x="1033.2" y="108.8" width="10.5" height="10.5"/><rect x="1024.7" y="99.0" width="10.5" height="10.5"/><rect x="1042.8" y="127.7" width="10.5" height="10.5"/><rect x="1101.7" y="129.8" width="10.5" height="10.5"/><rect x="1144.8" y="129.8" width="10.5" height="10.5"/><rect x="1194.8" y="97.5" width="10.5" height="10.5"/><rect x="1191.8" y="101.0" width="10.5" height="10.5"/><rect x="1188.8" y="104.0" width="10.5" height="10.5"/><rect x="1184.8" y="108.7" width="10.5" height="10.5"/><rect x="905.0" y="133.8" width="10.5" height="10.5"/><rect x="965.4" y="130.8" width="10.5" height="10.5"/><rect x="978.2" y="130.8" width="10.5" height="10.5"/><rect x="991.9" y="124.7" width="10.5" height="10.5"/><rect x="906.8" y="150.4" width="10.5" height="10.5"/><rect x="913.5" y="152.9" width="10.5" height="10.5"/><rect x="909.2" y="162.2" width="10.5" height="10.5"/><rect x="909.2" y="169.7" width="10.5" height="10.5"/><rect x="925.5" y="163.7" width="10.5" height="10.5"/><rect x="942.8" y="162.8" width="10.5" height="10.5"/><rect x="942.8" y="166.6" width="10.5" height="10.5"/><rect x="967.9" y="164.9" width="10.5" height="10.5"/><rect x="1003.5" y="152.6" width="10.5" height="10.5"/><rect x="1000.8" y="175.8" width="10.5" height="10.5"/><rect x="973.8" y="191.9" width="10.5" height="10.5"/><rect x="915.0" y="199.7" width="10.5" height="10.5"/><rect x="1059.8" y="153.8" width="10.5" height="10.5"/><rect x="1079.8" y="159.2" width="10.5" height="10.5"/><rect x="1108.8" y="162.8" width="10.5" height="10.5"/><rect x="1019.3" y="202.2" width="10.5" height="10.5"/><rect x="918.0" y="223.2" width="10.5" height="10.5"/><rect x="942.0" y="231.7" width="10.5" height="10.5"/><rect x="1047.8" y="223.2" width="10.5" height="10.5"/><rect x="1060.8" y="248.7" width="10.5" height="10.5"/><rect x="931.9" y="293.2" width="10.5" height="10.5"/><rect x="941.1" y="384.1" width="10.5" height="10.5"/><rect x="1016.8" y="98.8" width="10.5" height="10.5"/><rect x="1020.8" y="104.8" width="10.5" height="10.5"/><rect x="1027.8" y="103.8" width="10.5" height="10.5"/><rect x="1006.8" y="106.8" width="10.5" height="10.5"/><rect x="1028.8" y="92.8" width="10.5" height="10.5"/><rect x="1018.8" y="93.8" width="10.5" height="10.5"/><rect x="1011.8" y="109.2" width="10.5" height="10.5"/><rect x="1013.6" y="110.5" width="10.5" height="10.5"/><rect x="1015.5" y="108.5" width="10.5" height="10.5"/><rect x="1017.5" y="109.8" width="10.5" height="10.5"/><rect x="1019.3" y="107.8" width="10.5" height="10.5"/><rect x="1021.2" y="109.0" width="10.5" height="10.5"/><rect x="1023.2" y="107.0" width="10.5" height="10.5"/><rect x="1025.0" y="108.2" width="10.5" height="10.5"/><rect x="1027.0" y="106.3" width="10.5" height="10.5"/><rect x="1028.8" y="107.5" width="10.5" height="10.5"/><rect x="1030.8" y="105.7" width="10.5" height="10.5"/><rect x="1032.7" y="107.0" width="10.5" height="10.5"/><rect x="1034.5" y="105.0" width="10.5" height="10.5"/><rect x="1036.5" y="106.2" width="10.5" height="10.5"/><rect x="1030.8" y="101.2" width="10.5" height="10.5"/><rect x="1032.8" y="102.8" width="10.5" height="10.5"/><rect x="1035.2" y="104.2" width="10.5" height="10.5"/><rect x="1028.2" y="99.8" width="10.5" height="10.5"/></g><g fill="none" stroke="#fff" stroke-width="1.25"><rect x="961.5" y="137.5" width="10.5" height="10.5"/><rect x="962.5" y="139" width="10.5" height="10.5"/><rect x="961" y="140.5" width="10.5" height="10.5"/></g><rect x="961.3" y="139.5" width="11.5" height="11.2" fill="none" stroke="#000" stroke-width="1.4"/><g stroke="#0a0a0a" stroke-width="1.05"><circle cx="898.5" cy="71.0" r="3.2" fill="#20e020"/><circle cx="910.0" cy="75.5" r="3.2" fill="#5a8a30"/><circle cx="915.1" cy="79.6" r="3.2" fill="#5a8a30"/><circle cx="917.6" cy="82.3" r="3.2" fill="#507828"/><circle cx="904.0" cy="106.7" r="3.2" fill="#208050"/><circle cx="926.0" cy="104.9" r="3.2" fill="#609060"/><circle cx="920.9" cy="111.3" r="3.2" fill="#204830"/><circle cx="916.0" cy="119.9" r="3.2" fill="#409070"/><circle cx="932.0" cy="130.4" r="3.2" fill="#70a080"/><circle cx="945.0" cy="87.8" r="3.2" fill="#7a9038"/><circle cx="954.0" cy="86.0" r="3.2" fill="#5a6830"/><circle cx="955.8" cy="76.9" r="3.2" fill="#a0a020"/><circle cx="960.1" cy="76.9" r="3.2" fill="#8a8a28"/><circle cx="966.9" cy="78.4" r="3.2" fill="#f0f020"/><circle cx="973.9" cy="81.4" r="3.2" fill="#909030"/><circle cx="981.7" cy="79.3" r="3.2" fill="#b0a830"/><circle cx="997.7" cy="83.0" r="3.2" fill="#b09030"/><circle cx="1003.9" cy="81.8" r="3.2" fill="#e0b020"/><circle cx="1008.8" cy="83.0" r="3.2" fill="#f0b010"/><circle cx="1031.0" cy="85.1" r="3.2" fill="#e0a020"/><circle cx="1034.7" cy="85.1" r="3.2" fill="#f0a010"/><circle cx="1020.9" cy="90.3" r="3.2" fill="#b07830"/><circle cx="1019.9" cy="103.0" r="3.2" fill="#805030"/><circle cx="1030.1" cy="100.5" r="3.2" fill="#6a4820"/><circle cx="1038.4" cy="104.9" r="3.2" fill="#503020"/><circle cx="970.6" cy="110.4" r="3.2" fill="#c0b870"/><circle cx="986.0" cy="112.2" r="3.2" fill="#383830"/><circle cx="957.0" cy="124.8" r="3.2" fill="#c4d0b4"/><circle cx="995.9" cy="121.5" r="3.2" fill="#e0a080"/><circle cx="1008.2" cy="112.2" r="3.2" fill="#c08060"/><circle cx="1008.2" cy="117.8" r="3.2" fill="#c08868"/><circle cx="1004.5" cy="120.9" r="3.2" fill="#b07858"/><circle cx="1015.0" cy="119.6" r="3.2" fill="#d09070"/><circle cx="1021.1" cy="112.2" r="3.2" fill="#c88868"/><circle cx="1027.3" cy="113.5" r="3.2" fill="#d09070"/><circle cx="1030.1" cy="117.8" r="3.2" fill="#e89878"/><circle cx="995.3" cy="128.3" r="3.2" fill="#e8a888"/><circle cx="1049.0" cy="93.8" r="3.2" fill="#a06830"/><circle cx="1073.0" cy="89.4" r="3.2" fill="#e08818"/><circle cx="1100.5" cy="92.9" r="3.2" fill="#e88010"/><circle cx="1043.2" cy="105.7" r="3.2" fill="#482818"/><circle cx="1046.5" cy="104.2" r="3.2" fill="#906030"/><circle cx="1157.8" cy="104.9" r="3.2" fill="#d04838"/><circle cx="1046.5" cy="124.7" r="3.2" fill="#d07060"/><circle cx="1106.9" cy="124.7" r="3.2" fill="#c85058"/><circle cx="1196.3" cy="103.2" r="3.2" fill="#f01010"/><circle cx="1190.9" cy="109.0" r="3.2" fill="#b01828"/><circle cx="1187.0" cy="114.7" r="3.2" fill="#a81830"/><circle cx="1145.1" cy="143.5" r="3.2" fill="#b02848"/><circle cx="951.5" cy="132.3" r="3.2" fill="#c4ccb8"/><circle cx="954.9" cy="139.7" r="3.2" fill="#c4ccc0"/><circle cx="969.0" cy="140.3" r="3.2" fill="#d0d0c8"/><circle cx="979.0" cy="139.7" r="3.2" fill="#e8d4c0"/><circle cx="995.3" cy="129.9" r="3.2" fill="#f4d0b4"/><circle cx="992.4" cy="135.4" r="3.2" fill="#f4c8b0"/><circle cx="1036.5" cy="137.9" r="3.2" fill="#d87878"/><circle cx="910.0" cy="139.7" r="3.2" fill="#308070"/><circle cx="912.3" cy="142.8" r="3.2" fill="#206858"/><circle cx="910.8" cy="147.1" r="3.2" fill="#309088"/><circle cx="913.9" cy="160.7" r="3.2" fill="#10e8e8"/><circle cx="919.4" cy="165.4" r="3.2" fill="#408890"/><circle cx="915.7" cy="174.2" r="3.2" fill="#308088"/><circle cx="933.0" cy="174.2" r="3.2" fill="#6898a0"/><circle cx="949.6" cy="172.4" r="3.2" fill="#707880"/><circle cx="947.8" cy="177.9" r="3.2" fill="#8098a8"/><circle cx="971.5" cy="176.3" r="3.2" fill="#8878a0"/><circle cx="1002.4" cy="164.4" r="3.2" fill="#a87098"/><circle cx="918.5" cy="183.9" r="3.2" fill="#185858"/><circle cx="958.9" cy="193.9" r="3.2" fill="#000000"/><circle cx="1007.0" cy="193.0" r="3.2" fill="#503850"/><circle cx="1114.9" cy="137.9" r="3.2" fill="#602838"/><circle cx="1072.0" cy="167.8" r="3.2" fill="#502030"/><circle cx="1074.9" cy="174.5" r="3.2" fill="#b04878"/><circle cx="1110.6" cy="182.0" r="3.2" fill="#983060"/><circle cx="921.9" cy="210.8" r="3.2" fill="#2088a0"/><circle cx="978.8" cy="203.9" r="3.2" fill="#8878a0"/><circle cx="1026.9" cy="223.9" r="3.2" fill="#583850"/><circle cx="928.6" cy="242.9" r="3.2" fill="#205050"/><circle cx="949.5" cy="245.1" r="3.2" fill="#6070a0"/><circle cx="1053.7" cy="245.9" r="3.2" fill="#683058"/><circle cx="1063.1" cy="269.2" r="3.2" fill="#f020e0"/><circle cx="955.2" cy="404.2" r="3.2" fill="#1010e0"/><circle cx="941.8" cy="319.4" r="3.2" fill="#124a60"/></g><circle cx="965.1" cy="150.2" r="3.9" fill="#2c2c2c" stroke="#000" stroke-width="1"/></svg>
</div>
<div id="cieframe"></div>
<div class="bt" style="left:485.0px"></div><div class="bl" style="left:465.5px">0</div><div class="bt" style="left:523.0px"></div><div class="bl" style="left:503.5px">2</div><div class="bt" style="left:561.0px"></div><div class="bl" style="left:541.5px">4</div><div class="bt" style="left:599.4px"></div><div class="bl" style="left:579.9px">6</div><div class="bt" style="left:638.0px"></div><div class="bl" style="left:618.5px">8</div><div class="bt" style="left:676.5px"></div><div class="bl" style="left:657.0px">10</div><div class="bt" style="left:714.8px"></div><div class="bl" style="left:695.3px">12</div><div class="bt" style="left:753.0px"></div><div class="bl" style="left:733.5px">14</div><div class="ct" style="left:830.8px"></div><div class="cl" style="left:810.5px">0,05</div><div class="ct" style="left:876.8px"></div><div class="cl" style="left:856.5px">0,1</div><div class="ct" style="left:922.9px"></div><div class="cl" style="left:902.6px">0,15</div><div class="ct" style="left:968.9px"></div><div class="cl" style="left:948.6px">0,2</div><div class="ct" style="left:1015.0px"></div><div class="cl" style="left:994.7px">0,25</div><div class="ct" style="left:1061.0px"></div><div class="cl" style="left:1040.7px">0,3</div><div class="ct" style="left:1107.0px"></div><div class="cl" style="left:1086.7px">0,35</div><div class="ct" style="left:1153.1px"></div><div class="cl" style="left:1132.8px">0,4</div><div class="ct" style="left:1199.1px"></div><div class="cl" style="left:1178.8px">0,45</div><div class="ct" style="left:1245.2px"></div><div class="cl" style="left:1224.9px">0,5</div><div class="ct" style="left:1291.2px"></div><div class="cl" style="left:1270.9px">0,55</div><div class="cyt" style="top:42.1px"></div><div class="cyl" style="top:36.2px">0,6</div><div class="cyt" style="top:81.4px"></div><div class="cyl" style="top:75.5px">0,55</div><div class="cyt" style="top:120.7px"></div><div class="cyl" style="top:114.8px">0,5</div><div class="cyt" style="top:159.9px"></div><div class="cyl" style="top:154.0px">0,45</div><div class="cyt" style="top:199.2px"></div><div class="cyl" style="top:193.3px">0,4</div><div class="cyt" style="top:238.5px"></div><div class="cyl" style="top:232.6px">0,35</div><div class="cyt" style="top:277.8px"></div><div class="cyl" style="top:271.9px">0,3</div><div class="cyt" style="top:317.1px"></div><div class="cyl" style="top:311.2px">0,25</div><div class="cyt" style="top:356.3px"></div><div class="cyl" style="top:350.4px">0,2</div><div class="cyt" style="top:395.6px"></div><div class="cyl" style="top:389.7px">0,15</div><div class="cyt" style="top:434.9px"></div><div class="cyl" style="top:429.0px">0,1</div>
<div id="inset"><div class="lay" style="background:linear-gradient(123deg,#62990a 0,#749909 25%,#959609 50%,#998205 75%,#9a6a00 100%)"></div><div class="lay" style="clip-path:polygon(0 11.5px,100% 98.5px,100% 100%,0 100%);background:linear-gradient(123deg,#a6ff10 0,#c4ff14 25%,#ffff14 50%,#ffd808 75%,#ffb000 100%)"></div><svg class="lay" width="146" height="111"><ellipse cx="47.4" cy="43.3" rx="3.4" ry="3" fill="#eaea08" stroke="#1a1a00" stroke-width="1.1"/><rect x="67.7" y="48.8" width="11" height="11" fill="none" stroke="#fff" stroke-width="1.1"/></svg></div>
<div id="rgbbox"></div>
<div id="strip"></div>
<div class="sw" style="left:20.1px;background:linear-gradient(#f2f5fe 0,#f2f5fe 49.5%,#f5f5f5 50.5%,#f5f5f5 100%)"></div><div class="swl" style="left:10.1px">White</div><div class="sw" style="left:75.3px;background:linear-gradient(#dadee8 0,#dadee8 49.5%,#dfdfdf 50.5%,#dfdfdf 100%)"></div><div class="swl" style="left:65.3px">6J</div><div class="sw" style="left:130.4px;background:linear-gradient(#bfc2cb 0,#bfc2cb 49.5%,#c4c4c4 50.5%,#c4c4c4 100%)"></div><div class="swl" style="left:120.4px">5F</div><div class="sw" style="left:185.6px;background:linear-gradient(#b2b4bd 0,#b2b4bd 49.5%,#b7b7b7 50.5%,#b7b7b7 100%)"></div><div class="swl" style="left:175.6px">6I</div><div class="sw" style="left:240.7px;background:linear-gradient(#a5a7b0 0,#a5a7b0 49.5%,#a9a9a9 50.5%,#a9a9a9 100%)"></div><div class="swl" style="left:230.7px">6K</div><div class="sw" style="left:295.9px;background:linear-gradient(#9a9ca5 0,#9a9ca5 49.5%,#9e9e9e 50.5%,#9e9e9e 100%)"></div><div class="swl" style="left:285.9px">5G</div><div class="sw" style="left:351.1px;background:linear-gradient(#8c8e96 0,#8c8e96 49.5%,#8f8f8f 50.5%,#8f8f8f 100%)"></div><div class="swl" style="left:341.1px">6H</div><div class="sw" style="left:406.2px;background:linear-gradient(#78797e 0,#78797e 49.5%,#797979 50.5%,#797979 100%)"></div><div class="swl" style="left:396.2px">5H</div><div class="sw" style="left:461.4px;background:linear-gradient(#6b6b70 0,#6b6b70 49.5%,#6b6b6b 50.5%,#6b6b6b 100%)"></div><div class="swl" style="left:451.4px">7K</div><div class="sw" style="left:516.5px;background:linear-gradient(#5e5f64 0,#5e5f64 49.5%,#5e5e5e 50.5%,#5e5e5e 100%)"></div><div class="swl" style="left:506.5px">6G</div><div class="sw" style="left:571.7px;background:linear-gradient(#545559 0,#545559 49.5%,#545454 50.5%,#545454 100%)"></div><div class="swl" style="left:561.7px">5I</div><div class="sw" style="left:626.9px;background:linear-gradient(#4a4b4f 0,#4a4b4f 49.5%,#4a4a4a 50.5%,#4a4a4a 100%)"></div><div class="swl" style="left:616.9px">6F</div><div class="sw" style="left:682.0px;background:linear-gradient(#36373a 0,#36373a 49.5%,#373737 50.5%,#373737 100%)"></div><div class="swl" style="left:672.0px">8K</div><div class="sw" style="left:737.2px;background:linear-gradient(#2a2b2d 0,#2a2b2d 49.5%,#2c2c2c 50.5%,#2c2c2c 100%)"></div><div class="swl" style="left:727.2px">5J</div><div class="sw" style="left:792.3px;background:linear-gradient(#020204 0,#020204 49.5%,#000000 50.5%,#000000 100%)"></div><div class="swl" style="left:782.3px">Black</div><div class="sw" style="left:847.5px;background:linear-gradient(#95165f 0,#95165f 49.5%,#921c52 50.5%,#921c52 100%)"></div><div class="swl" style="left:837.5px">2B</div><div class="sw" style="left:902.7px;background:linear-gradient(#4f2b4d 0,#4f2b4d 49.5%,#4b2b47 50.5%,#4b2b47 100%)"></div><div class="swl" style="left:892.7px">2C</div><div class="sw" style="left:957.8px;background:linear-gradient(#d3d1c9 0,#d3d1c9 49.5%,#dad2c2 50.5%,#dad2c2 100%)"></div><div class="swl" style="left:947.8px">2D</div><div class="sw" style="left:1013.0px;background:linear-gradient(#734426 0,#734426 49.5%,#734327 50.5%,#734327 100%)"></div><div class="swl" style="left:1003.0px">2E</div><div class="sw" style="left:1068.1px;background:linear-gradient(#c78f71 0,#c78f71 49.5%,#cb8b68 50.5%,#cb8b68 100%)"></div><div class="swl" style="left:1058.1px">2F</div><div class="sw" style="left:1123.3px;background:linear-gradient(#5d728b 0,#5d728b 49.5%,#5a7086 50.5%,#5a7086 100%)"></div><div class="swl" style="left:1113.3px">2G</div><div class="sw" style="left:1178.5px;background:linear-gradient(#546621 0,#546621 49.5%,#566522 50.5%,#566522 100%)"></div><div class="swl" style="left:1168.5px">2H</div><div class="sw" style="left:1233.6px;background:linear-gradient(#81779c 0,#81779c 49.5%,#807592 50.5%,#807592 100%)"></div><div class="swl" style="left:1223.6px">2I</div><div class="sw" style="left:1288.8px;background:linear-gradient(#6bb493 0,#6bb493 49.5%,#6cb58f 50.5%,#6cb58f 100%)"></div><div class="swl" style="left:1278.8px">2J</div>
<div class="sw" style="left:1343.6px;background:#f4f4f6"></div>
<div class="rot" id="ract" style="left:7px;top:529px">Actual</div><div class="rot" id="rtar" style="left:7px;top:605px">Target</div>
<div class="t" style="left:15.2px;top:26.05px;font-size:31.6px;color:#f6f6f6;letter-spacing:-0.170px;-webkit-text-stroke:0.15px #f6f6f6;">ColorChecker Analysis</div><div class="t" style="left:49.2px;top:72.03px;font-size:13.2px;color:#f0f0f0;">1.</div><div class="t" style="left:68.1px;top:71.61px;font-size:14.4px;color:#f0f0f0;letter-spacing:-0.025px;">Click the</div><div class="t" style="left:127.2px;top:71.61px;font-size:14.4px;color:#f0f0f0;font-style:italic;letter-spacing:-0.520px;">Read Series</div><div class="t" style="left:205.4px;top:71.61px;font-size:14.4px;color:#f0f0f0;letter-spacing:0.286px;">button to measure all colors.</div><div class="t" style="left:50.2px;top:96.03px;font-size:13.2px;color:#f0f0f0;">2.</div><div class="t" style="left:67.8px;top:95.61px;font-size:14.4px;color:#f0f0f0;letter-spacing:0.230px;">Mouse over the error bars on the deltaE chart to view a</div><div class="t" style="left:68.1px;top:115.36px;font-size:14.4px;color:#f0f0f0;letter-spacing:0.140px;">visual representation of each color error. 1 dE error or less is</div><div class="t" style="left:68.1px;top:135.11px;font-size:14.4px;color:#f0f0f0;letter-spacing:0.305px;">typically not visible.</div><div class="t" style="left:68.1px;top:154.86px;font-size:14.4px;color:#f0f0f0;letter-spacing:0.177px;">View a larger visual error comparison for each color value on</div><div class="t" style="left:68.1px;top:174.61px;font-size:14.4px;color:#f0f0f0;letter-spacing:0.350px;">the color comparator chart below.</div><div class="t" style="left:50.2px;top:199.33px;font-size:13.2px;color:#f0f0f0;">3.</div><div class="t" style="left:68.1px;top:198.91px;font-size:14.4px;color:#f0f0f0;letter-spacing:0.166px;">Click “Save” to save data and view or print your</div><div class="t" style="left:382.4px;top:198.91px;font-size:14.4px;color:#f0f0f0;font-style:italic;letter-spacing:-0.300px;">Display</div><div class="t" style="left:68.1px;top:218.66px;font-size:14.4px;color:#f0f0f0;font-style:italic;letter-spacing:0.191px;">Conformance Certificate.</div><div class="t" style="left:50.2px;top:243.23px;font-size:13.2px;color:#f0f0f0;">4.</div><div class="t" style="left:68.1px;top:242.81px;font-size:14.4px;color:#f0f0f0;letter-spacing:0.280px;">Click “Next” to check how well the display could perform</div><div class="t" style="left:68.1px;top:262.56px;font-size:14.4px;color:#f0f0f0;letter-spacing:0.100px;">with a corrective 3D LUT.</div><div class="t" style="left:176.5px;top:320.60px;font-size:15px;color:#f0f0f0;letter-spacing:0.693px;">Performance Data</div><div class="t" style="left:17.8px;top:345.87px;font-size:20px;color:#f6f6f6;letter-spacing:0.480px;-webkit-text-stroke:0.15px #f6f6f6;">White Luminance:</div><div class="t" style="left:194.5px;top:345.87px;font-size:20px;color:#f6f6f6;letter-spacing:0.250px;-webkit-text-stroke:0.15px #f6f6f6;">419,8</div><div class="t" style="left:270.2px;top:345.87px;font-size:20px;color:#f6f6f6;letter-spacing:1.400px;-webkit-text-stroke:0.15px #f6f6f6;">cd/m²</div><div class="t" style="left:22.6px;top:378.47px;font-size:20px;color:#f6f6f6;letter-spacing:0.080px;-webkit-text-stroke:0.15px #f6f6f6;">Black Luminance:</div><div class="t" style="left:191.8px;top:378.47px;font-size:20px;color:#f6f6f6;letter-spacing:0.300px;-webkit-text-stroke:0.15px #f6f6f6;">0,254</div><div class="t" style="left:270.2px;top:378.47px;font-size:20px;color:#f6f6f6;letter-spacing:1.400px;-webkit-text-stroke:0.15px #f6f6f6;">cd/m²</div><div class="t" style="left:82.8px;top:411.67px;font-size:20px;color:#f6f6f6;letter-spacing:0.060px;-webkit-text-stroke:0.15px #f6f6f6;">Avg deltaE:</div><div class="t" style="left:194.2px;top:411.67px;font-size:20px;color:#f6f6f6;letter-spacing:0.200px;-webkit-text-stroke:0.15px #f6f6f6;">2,5</div><div class="t" style="left:77.1px;top:444.47px;font-size:20px;color:#f6f6f6;letter-spacing:0.340px;-webkit-text-stroke:0.15px #f6f6f6;">Max deltaE:</div><div class="t" style="left:196.1px;top:444.47px;font-size:20px;color:#f6f6f6;letter-spacing:0.600px;-webkit-text-stroke:0.15px #f6f6f6;">4,9</div><div class="t" style="left:266.0px;top:444.47px;font-size:20px;color:#f6f6f6;letter-spacing:0.462px;-webkit-text-stroke:0.15px #f6f6f6;">@ Point: White</div><div class="t" style="left:596.7px;top:16.89px;font-size:11px;color:#dcdcdc;letter-spacing:0.420px;">DeltaE 2000</div><div class="t" style="left:1037.3px;top:22.09px;font-size:11px;color:#e0e0e0;font-weight:bold;letter-spacing:0.083px;">CIE 1976 u'v'</div><div class="t" style="left:1122.8px;top:391.81px;font-size:17px;color:#f2f2f2;letter-spacing:-0.426px;-webkit-text-stroke:0.15px #f2f2f2;">RGB Triplet: 255, 255, 0</div><div class="t" style="left:1160.3px;top:412.71px;font-size:17px;color:#f2f2f2;letter-spacing:-0.420px;-webkit-text-stroke:0.15px #f2f2f2;">deltaE: 2,3</div>
</body></html>
